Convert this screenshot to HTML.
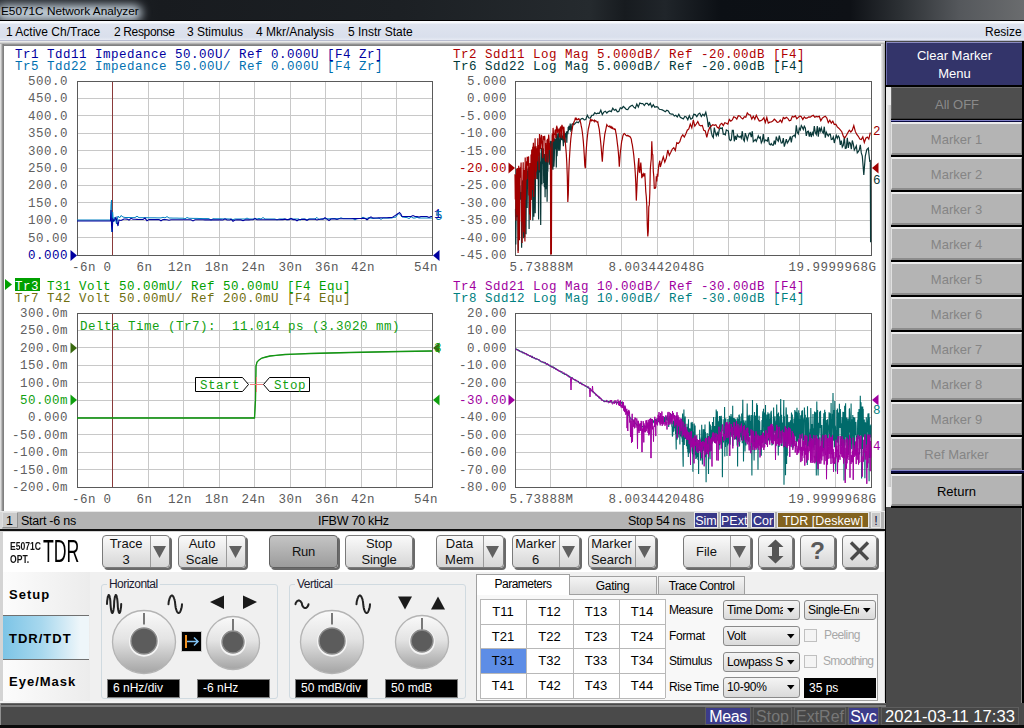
<!DOCTYPE html><html><head><meta charset="utf-8"><style>
*{margin:0;padding:0;box-sizing:border-box}
html,body{width:1024px;height:728px;overflow:hidden;background:#4a4a4a;font-family:"Liberation Sans",sans-serif}
.a{position:absolute}
.m{font-family:"Liberation Mono",monospace;font-size:12.5px;letter-spacing:0.5px;line-height:12px;white-space:pre}
.s{font-family:"Liberation Sans",sans-serif;white-space:pre}
.btn{position:absolute;border:1px solid #7a7a7a;border-radius:4px;background:linear-gradient(#fafafa,#d6d6d6);box-shadow:2px 2px 0 #6a6a6a;font-size:13px;letter-spacing:-0.2px;color:#111;text-align:center;line-height:15px}
.sk{position:absolute;left:891px;width:131px;height:33px;background:#b4b4b4;border-top:2px solid #ececec;border-left:1px solid #e0e0e0;border-right:1px solid #8a8a8a;border-bottom:2px solid #8c8c8c;color:#858585;font-size:13px;text-align:center;line-height:31px}
</style></head><body>

<div class="a" style="left:0;top:0;width:1024px;height:21px;background:linear-gradient(90deg,#2a2e34 0px,#181b1f 160px,#1c2024 400px,#252a2e 590px,#171b1f 625px,#20252a 665px,#0c1015 720px,#0e1116 850px,#2c3034 900px,#55585c 960px,#6a6c6e 1024px)"></div>
<div class="a" style="left:0;top:0;width:200px;height:20px;overflow:hidden"><div class="a" style="left:-4px;top:5px;width:146px;height:16px;background:#c4d0da;border-radius:8px;filter:blur(5px)"></div></div>
<div class="a" style="left:0;top:20px;width:1024px;height:1px;background:#000"></div>
<div class="a s" style="left:1px;top:4px;font-size:11.8px;color:#000">E5071C Network Analyzer</div>

<div class="a" style="left:0;top:21px;width:1024px;height:20px;background:linear-gradient(#f7f9fc 0,#f7f9fc 2px,#dfe4ef 3px,#d9dfec 16px,#e6eaf3 19px)"></div>
<div class="a" style="left:0;top:40px;width:1024px;height:1px;background:#b8bcd0"></div>

<div class="a s" style="left:6px;top:25px;font-size:12px;letter-spacing:0px;color:#000">1 Active Ch/Trace</div>
<div class="a s" style="left:114px;top:25px;font-size:12px;letter-spacing:-0.35px;color:#000">2 Response</div>
<div class="a s" style="left:187px;top:25px;font-size:12px;letter-spacing:0px;color:#000">3 Stimulus</div>
<div class="a s" style="left:256px;top:25px;font-size:12px;letter-spacing:0px;color:#000">4 Mkr/Analysis</div>
<div class="a s" style="left:348px;top:25px;font-size:12px;letter-spacing:0px;color:#000">5 Instr State</div>
<div class="a s" style="left:985px;top:25px;font-size:12px;letter-spacing:0px;color:#000">Resize</div>
<div class="a" style="left:0;top:41px;width:886px;height:490px;background:#d8d8d8"></div>
<div class="a" style="left:2px;top:41px;width:882px;height:471px;background:#808080"></div><div class="a" style="left:0;top:41px;width:885px;height:5px;background:linear-gradient(#f2f2f2 0,#e0e0e0 1px,#c8c8c8 2px,#a0a0a0 3px,#808080 4px)"></div><div class="a" style="left:0;top:44px;width:4px;height:467px;background:linear-gradient(90deg,#eaeaea 0,#d0d0d0 1px,#a4a4a4 2px,#808080 3px)"></div>
<div class="a" style="left:4px;top:46px;width:877px;height:465px;background:#fff"></div>
<div class="a" style="left:881px;top:44px;width:4px;height:468px;background:linear-gradient(90deg,#f0f0f0,#a0a0a0)"></div>
<div class="a" style="left:885px;top:41px;width:1px;height:490px;background:#000"></div>

<svg class="a" style="left:0;top:0" width="1024" height="728" viewBox="0 0 1024 728"><g stroke="#c8c8c8" stroke-width="1" shape-rendering="crispEdges"><line x1="112.5" y1="81" x2="112.5" y2="255"/><line x1="77" y1="98.5" x2="432" y2="98.5"/><line x1="148.5" y1="81" x2="148.5" y2="255"/><line x1="77" y1="115.5" x2="432" y2="115.5"/><line x1="183.5" y1="81" x2="183.5" y2="255"/><line x1="77" y1="133.5" x2="432" y2="133.5"/><line x1="219.5" y1="81" x2="219.5" y2="255"/><line x1="77" y1="150.5" x2="432" y2="150.5"/><line x1="254.5" y1="81" x2="254.5" y2="255"/><line x1="77" y1="168.5" x2="432" y2="168.5"/><line x1="290.5" y1="81" x2="290.5" y2="255"/><line x1="77" y1="185.5" x2="432" y2="185.5"/><line x1="325.5" y1="81" x2="325.5" y2="255"/><line x1="77" y1="202.5" x2="432" y2="202.5"/><line x1="361.5" y1="81" x2="361.5" y2="255"/><line x1="77" y1="220.5" x2="432" y2="220.5"/><line x1="396.5" y1="81" x2="396.5" y2="255"/><line x1="77" y1="237.5" x2="432" y2="237.5"/></g><line x1="112.5" y1="81" x2="112.5" y2="255" stroke="#8a3a3a" stroke-width="1" shape-rendering="crispEdges"/><rect x="77.5" y="81.5" width="355" height="174" fill="none" stroke="#5a5a5a" stroke-width="1" shape-rendering="crispEdges"/></svg>
<svg class="a" style="left:0;top:0" width="1024" height="728" viewBox="0 0 1024 728"><g stroke="#c8c8c8" stroke-width="1" shape-rendering="crispEdges"><line x1="550.5" y1="81" x2="550.5" y2="255"/><line x1="515" y1="98.5" x2="871" y2="98.5"/><line x1="586.5" y1="81" x2="586.5" y2="255"/><line x1="515" y1="115.5" x2="871" y2="115.5"/><line x1="621.5" y1="81" x2="621.5" y2="255"/><line x1="515" y1="133.5" x2="871" y2="133.5"/><line x1="657.5" y1="81" x2="657.5" y2="255"/><line x1="515" y1="150.5" x2="871" y2="150.5"/><line x1="693.5" y1="81" x2="693.5" y2="255"/><line x1="515" y1="168.5" x2="871" y2="168.5"/><line x1="728.5" y1="81" x2="728.5" y2="255"/><line x1="515" y1="185.5" x2="871" y2="185.5"/><line x1="764.5" y1="81" x2="764.5" y2="255"/><line x1="515" y1="202.5" x2="871" y2="202.5"/><line x1="799.5" y1="81" x2="799.5" y2="255"/><line x1="515" y1="220.5" x2="871" y2="220.5"/><line x1="835.5" y1="81" x2="835.5" y2="255"/><line x1="515" y1="237.5" x2="871" y2="237.5"/></g><rect x="515.5" y="81.5" width="356" height="174" fill="none" stroke="#5a5a5a" stroke-width="1" shape-rendering="crispEdges"/></svg>
<svg class="a" style="left:0;top:0" width="1024" height="728" viewBox="0 0 1024 728"><g stroke="#c8c8c8" stroke-width="1" shape-rendering="crispEdges"><line x1="112.5" y1="313" x2="112.5" y2="487"/><line x1="77" y1="330.5" x2="432" y2="330.5"/><line x1="148.5" y1="313" x2="148.5" y2="487"/><line x1="77" y1="347.5" x2="432" y2="347.5"/><line x1="183.5" y1="313" x2="183.5" y2="487"/><line x1="77" y1="365.5" x2="432" y2="365.5"/><line x1="219.5" y1="313" x2="219.5" y2="487"/><line x1="77" y1="382.5" x2="432" y2="382.5"/><line x1="254.5" y1="313" x2="254.5" y2="487"/><line x1="77" y1="400.5" x2="432" y2="400.5"/><line x1="290.5" y1="313" x2="290.5" y2="487"/><line x1="77" y1="417.5" x2="432" y2="417.5"/><line x1="325.5" y1="313" x2="325.5" y2="487"/><line x1="77" y1="434.5" x2="432" y2="434.5"/><line x1="361.5" y1="313" x2="361.5" y2="487"/><line x1="77" y1="452.5" x2="432" y2="452.5"/><line x1="396.5" y1="313" x2="396.5" y2="487"/><line x1="77" y1="469.5" x2="432" y2="469.5"/></g><line x1="112.5" y1="313" x2="112.5" y2="487" stroke="#8a3a3a" stroke-width="1" shape-rendering="crispEdges"/><rect x="77.5" y="313.5" width="355" height="174" fill="none" stroke="#5a5a5a" stroke-width="1" shape-rendering="crispEdges"/></svg>
<svg class="a" style="left:0;top:0" width="1024" height="728" viewBox="0 0 1024 728"><g stroke="#c8c8c8" stroke-width="1" shape-rendering="crispEdges"><line x1="550.5" y1="313" x2="550.5" y2="487"/><line x1="515" y1="330.5" x2="871" y2="330.5"/><line x1="586.5" y1="313" x2="586.5" y2="487"/><line x1="515" y1="347.5" x2="871" y2="347.5"/><line x1="621.5" y1="313" x2="621.5" y2="487"/><line x1="515" y1="365.5" x2="871" y2="365.5"/><line x1="657.5" y1="313" x2="657.5" y2="487"/><line x1="515" y1="382.5" x2="871" y2="382.5"/><line x1="693.5" y1="313" x2="693.5" y2="487"/><line x1="515" y1="400.5" x2="871" y2="400.5"/><line x1="728.5" y1="313" x2="728.5" y2="487"/><line x1="515" y1="417.5" x2="871" y2="417.5"/><line x1="764.5" y1="313" x2="764.5" y2="487"/><line x1="515" y1="434.5" x2="871" y2="434.5"/><line x1="799.5" y1="313" x2="799.5" y2="487"/><line x1="515" y1="452.5" x2="871" y2="452.5"/><line x1="835.5" y1="313" x2="835.5" y2="487"/><line x1="515" y1="469.5" x2="871" y2="469.5"/></g><rect x="515.5" y="313.5" width="356" height="174" fill="none" stroke="#5a5a5a" stroke-width="1" shape-rendering="crispEdges"/></svg>
<div class="a m" style="right:956px;top:76.0px;color:#606060">500.0</div><div class="a m" style="right:956px;top:93.4px;color:#606060">450.0</div><div class="a m" style="right:956px;top:110.8px;color:#606060">400.0</div><div class="a m" style="right:956px;top:128.2px;color:#606060">350.0</div><div class="a m" style="right:956px;top:145.6px;color:#606060">300.0</div><div class="a m" style="right:956px;top:163.0px;color:#606060">250.0</div><div class="a m" style="right:956px;top:180.4px;color:#606060">200.0</div><div class="a m" style="right:956px;top:197.8px;color:#606060">150.0</div><div class="a m" style="right:956px;top:215.2px;color:#606060">100.0</div><div class="a m" style="right:956px;top:232.6px;color:#606060">50.00</div><div class="a m" style="right:956px;top:250.0px;color:#0000a0">0.000</div>
<div class="a m" style="right:517px;top:76.0px;color:#606060">5.000</div><div class="a m" style="right:517px;top:93.4px;color:#606060">0.000</div><div class="a m" style="right:517px;top:110.8px;color:#606060">-5.000</div><div class="a m" style="right:517px;top:128.2px;color:#606060">-10.00</div><div class="a m" style="right:517px;top:145.6px;color:#606060">-15.00</div><div class="a m" style="right:517px;top:163.0px;color:#b00000">-20.00</div><div class="a m" style="right:517px;top:180.4px;color:#606060">-25.00</div><div class="a m" style="right:517px;top:197.8px;color:#606060">-30.00</div><div class="a m" style="right:517px;top:215.2px;color:#606060">-35.00</div><div class="a m" style="right:517px;top:232.6px;color:#606060">-40.00</div><div class="a m" style="right:517px;top:250.0px;color:#606060">-45.00</div>
<div class="a m" style="right:956px;top:308.0px;color:#606060">300.0m</div><div class="a m" style="right:956px;top:325.4px;color:#606060">250.0m</div><div class="a m" style="right:956px;top:342.8px;color:#606060">200.0m</div><div class="a m" style="right:956px;top:360.2px;color:#606060">150.0m</div><div class="a m" style="right:956px;top:377.6px;color:#606060">100.0m</div><div class="a m" style="right:956px;top:395.0px;color:#10a010">50.00m</div><div class="a m" style="right:956px;top:412.4px;color:#606060">0.000</div><div class="a m" style="right:956px;top:429.8px;color:#606060">-50.00m</div><div class="a m" style="right:956px;top:447.2px;color:#606060">-100.0m</div><div class="a m" style="right:956px;top:464.6px;color:#606060">-150.0m</div><div class="a m" style="right:956px;top:482.0px;color:#606060">-200.0m</div>
<div class="a m" style="right:517px;top:308.0px;color:#606060">20.00</div><div class="a m" style="right:517px;top:325.4px;color:#606060">10.00</div><div class="a m" style="right:517px;top:342.8px;color:#606060">0.000</div><div class="a m" style="right:517px;top:360.2px;color:#606060">-10.00</div><div class="a m" style="right:517px;top:377.6px;color:#606060">-20.00</div><div class="a m" style="right:517px;top:395.0px;color:#a000a0">-30.00</div><div class="a m" style="right:517px;top:412.4px;color:#606060">-40.00</div><div class="a m" style="right:517px;top:429.8px;color:#606060">-50.00</div><div class="a m" style="right:517px;top:447.2px;color:#606060">-60.00</div><div class="a m" style="right:517px;top:464.6px;color:#606060">-70.00</div><div class="a m" style="right:517px;top:482.0px;color:#606060">-80.00</div>
<div class="a m" style="left:72.0px;top:262px;color:#5a5a5a">-6n</div>
<div class="a m" style="left:103.5px;top:262px;color:#5a5a5a">0</div>
<div class="a m" style="left:136.5px;top:262px;color:#5a5a5a">6n</div>
<div class="a m" style="left:168.0px;top:262px;color:#5a5a5a">12n</div>
<div class="a m" style="left:205.0px;top:262px;color:#5a5a5a">18n</div>
<div class="a m" style="left:241.5px;top:262px;color:#5a5a5a">24n</div>
<div class="a m" style="left:278.5px;top:262px;color:#5a5a5a">30n</div>
<div class="a m" style="left:315.0px;top:262px;color:#5a5a5a">36n</div>
<div class="a m" style="left:351.0px;top:262px;color:#5a5a5a">42n</div>
<div class="a m" style="left:414.0px;top:262px;color:#5a5a5a">54n</div>
<div class="a m" style="left:509.5px;top:262px;color:#5a5a5a">5.73888M</div>
<div class="a m" style="left:608.5px;top:262px;color:#5a5a5a">8.003442048G</div>
<div class="a m" style="left:788.5px;top:262px;color:#5a5a5a">19.9999968G</div>
<div class="a m" style="left:72.0px;top:494px;color:#5a5a5a">-6n</div>
<div class="a m" style="left:103.5px;top:494px;color:#5a5a5a">0</div>
<div class="a m" style="left:136.5px;top:494px;color:#5a5a5a">6n</div>
<div class="a m" style="left:168.0px;top:494px;color:#5a5a5a">12n</div>
<div class="a m" style="left:205.0px;top:494px;color:#5a5a5a">18n</div>
<div class="a m" style="left:241.5px;top:494px;color:#5a5a5a">24n</div>
<div class="a m" style="left:278.5px;top:494px;color:#5a5a5a">30n</div>
<div class="a m" style="left:315.0px;top:494px;color:#5a5a5a">36n</div>
<div class="a m" style="left:351.0px;top:494px;color:#5a5a5a">42n</div>
<div class="a m" style="left:414.0px;top:494px;color:#5a5a5a">54n</div>
<div class="a m" style="left:509.5px;top:494px;color:#5a5a5a">5.73888M</div>
<div class="a m" style="left:608.5px;top:494px;color:#5a5a5a">8.003442048G</div>
<div class="a m" style="left:788.5px;top:494px;color:#5a5a5a">19.9999968G</div>
<div class="a m" style="left:15px;top:49px;color:#0000a0">Tr1 Tdd11 Impedance 50.00U/ Ref 0.000U [F4 Zr]</div>
<div class="a m" style="left:15px;top:61px;color:#0070b0">Tr5 Tdd22 Impedance 50.00U/ Ref 0.000U [F4 Zr]</div>
<div class="a m" style="left:453px;top:49px;color:#b00000">Tr2 Sdd11 Log Mag 5.000dB/ Ref -20.00dB [F4]</div>
<div class="a m" style="left:453px;top:61px;color:#003838">Tr6 Sdd22 Log Mag 5.000dB/ Ref -20.00dB [F4]</div>
<div class="a" style="left:15px;top:278px;width:25px;height:13px;background:#00a000"></div>
<svg class="a" style="left:5px;top:279px" width="8" height="12"><polygon points="0,0 7,5.5 0,11" fill="#00a000"/></svg>
<div class="a m" style="left:15px;top:281px;color:#00a000"><span style="color:#fff">Tr3</span> T31 Volt 50.00mU/ Ref 50.00mU [F4 Equ]</div>
<div class="a m" style="left:15px;top:293px;color:#707010">Tr7 T42 Volt 50.00mU/ Ref 200.0mU [F4 Equ]</div>
<div class="a m" style="left:453px;top:281px;color:#a000a0">Tr4 Sdd21 Log Mag 10.00dB/ Ref -30.00dB [F4]</div>
<div class="a m" style="left:453px;top:293px;color:#008080">Tr8 Sdd12 Log Mag 10.00dB/ Ref -30.00dB [F4]</div>
<svg class="a" style="left:0;top:0" width="1024" height="728" viewBox="0 0 1024 728"><path d="M77.0,220.0 L79.0,220.0 L81.0,220.0 L83.0,220.0 L85.0,220.0 L87.0,220.0 L89.0,220.0 L91.0,220.0 L93.0,220.0 L95.0,220.0 L97.0,220.0 L99.0,220.0 L101.0,220.0 L103.0,220.0 L105.0,220.0 L107.0,220.0 L108.0,220.0 L109.0,220.0 L110.5,220.0 L111.0,205.0 L111.5,200.0 L112.0,232.0 L112.6,212.0 L113.0,216.4 L113.5,222.0 L115.0,217.0 L116.5,224.0 L117.0,221.3 L118.0,216.0 L119.0,217.3 L119.5,218.0 L121.0,215.5 L123.0,217.0 L125.0,217.5 L127.0,217.5 L129.0,217.5 L131.0,217.6 L133.0,217.6 L135.0,217.6 L137.0,216.2 L139.0,217.7 L141.0,217.7 L143.0,217.7 L145.0,217.7 L147.0,217.7 L149.0,217.8 L151.0,217.8 L153.0,217.8 L155.0,217.8 L157.0,217.9 L159.0,217.9 L161.0,217.9 L163.0,217.3 L165.0,217.9 L167.0,216.6 L169.0,218.0 L170.0,218.0 L171.0,218.0 L173.0,218.1 L175.0,218.1 L177.0,218.1 L179.0,218.2 L181.0,218.2 L183.0,218.2 L185.0,218.8 L187.0,217.5 L189.0,218.3 L191.0,218.3 L193.0,218.4 L195.0,218.4 L197.0,218.4 L199.0,218.5 L201.0,218.5 L203.0,218.6 L205.0,218.6 L207.0,218.6 L209.0,218.7 L211.0,220.2 L213.0,218.7 L215.0,218.8 L217.0,218.8 L219.0,218.8 L221.0,218.8 L223.0,218.9 L225.0,218.9 L227.0,218.9 L229.0,219.0 L230.0,219.0 L231.0,219.0 L233.0,219.6 L235.0,219.0 L237.0,219.0 L239.0,219.0 L241.0,219.0 L243.0,219.0 L245.0,219.0 L247.0,218.1 L249.0,219.0 L251.0,219.0 L253.0,219.0 L255.0,219.0 L257.0,219.0 L259.0,218.4 L261.0,219.0 L263.0,217.5 L265.0,219.0 L267.0,219.0 L269.0,219.0 L271.0,219.0 L273.0,219.0 L275.0,219.0 L277.0,219.9 L279.0,219.0 L281.0,219.0 L283.0,219.0 L285.0,219.0 L287.0,219.9 L289.0,219.0 L291.0,219.0 L293.0,219.0 L295.0,219.0 L297.0,219.0 L299.0,219.0 L300.0,220.5 L301.0,219.0 L303.0,219.0 L305.0,219.0 L307.0,219.9 L309.0,218.9 L311.0,218.9 L313.0,218.9 L315.0,218.9 L317.0,217.4 L319.0,219.6 L321.0,218.8 L323.0,218.8 L325.0,218.8 L327.0,218.8 L329.0,218.8 L331.0,218.7 L333.0,218.7 L335.0,218.7 L337.0,218.7 L339.0,218.7 L341.0,217.8 L343.0,218.6 L345.0,218.6 L347.0,218.6 L349.0,218.6 L351.0,218.6 L353.0,218.6 L355.0,220.0 L357.0,218.5 L359.0,218.5 L360.0,218.5 L361.0,218.5 L363.0,217.1 L365.0,218.4 L367.0,218.4 L369.0,217.5 L371.0,218.3 L373.0,218.3 L375.0,218.3 L377.0,218.2 L379.0,218.2 L381.0,219.3 L383.0,218.1 L385.0,218.1 L387.0,218.1 L389.0,218.0 L391.0,218.0 L392.0,218.0 L393.0,217.5 L395.0,217.2 L396.0,217.1 L397.0,215.1 L399.0,213.4 L399.5,214.3 L401.0,215.4 L402.0,217.0 L403.0,217.1 L405.0,217.4 L407.0,217.6 L409.0,218.5 L410.0,218.0 L411.0,216.6 L413.0,218.0 L415.0,218.0 L417.0,217.3 L419.0,218.0 L421.0,218.0 L423.0,218.0 L425.0,218.0 L427.0,218.0 L429.0,218.0 L431.0,218.0 L432.0,218.0" fill="none" stroke="#0080c0" stroke-width="1"/><path d="M77.0,221.0 L79.0,221.0 L81.0,221.0 L83.0,221.0 L85.0,221.0 L87.0,221.0 L89.0,221.0 L91.0,221.0 L93.0,221.0 L95.0,221.0 L97.0,221.0 L99.0,221.0 L101.0,221.0 L103.0,221.0 L105.0,221.0 L107.0,221.0 L109.0,221.0 L110.5,221.0 L111.0,210.0 L111.6,226.0 L112.2,232.0 L112.8,219.0 L113.0,219.3 L114.0,221.0 L115.0,219.2 L116.0,217.5 L117.0,221.8 L118.0,226.0 L119.0,220.0 L121.0,220.5 L123.0,219.5 L124.0,219.0 L125.0,219.0 L127.0,219.1 L129.0,220.1 L131.0,218.3 L133.0,219.3 L135.0,219.3 L137.0,219.4 L139.0,219.5 L140.0,219.5 L141.0,219.5 L143.0,219.5 L145.0,218.1 L147.0,220.8 L149.0,219.6 L151.0,219.6 L153.0,219.6 L155.0,219.6 L157.0,219.6 L159.0,219.6 L161.0,220.8 L163.0,219.6 L165.0,219.6 L167.0,219.7 L169.0,220.2 L171.0,219.7 L173.0,219.7 L175.0,219.7 L177.0,219.7 L179.0,219.7 L181.0,219.7 L183.0,219.7 L185.0,219.8 L187.0,219.8 L189.0,219.8 L191.0,219.8 L193.0,220.9 L195.0,219.8 L197.0,219.8 L199.0,219.8 L201.0,219.8 L203.0,219.8 L205.0,219.9 L207.0,219.9 L209.0,219.9 L211.0,219.9 L213.0,219.9 L215.0,219.9 L217.0,219.9 L219.0,219.9 L221.0,219.9 L223.0,220.0 L225.0,218.8 L227.0,220.0 L229.0,220.0 L230.0,220.0 L231.0,219.2 L233.0,221.2 L235.0,220.0 L237.0,219.9 L239.0,219.9 L241.0,219.9 L243.0,220.7 L245.0,219.9 L247.0,219.9 L249.0,219.9 L251.0,219.8 L253.0,219.8 L255.0,218.4 L257.0,219.8 L259.0,219.8 L261.0,219.8 L263.0,219.8 L265.0,219.8 L267.0,219.7 L269.0,219.7 L271.0,219.7 L273.0,219.7 L275.0,219.7 L277.0,219.7 L279.0,219.7 L281.0,219.6 L283.0,219.6 L285.0,219.1 L287.0,219.6 L289.0,219.6 L291.0,218.5 L293.0,219.6 L295.0,219.5 L297.0,220.8 L299.0,219.5 L300.0,219.5 L301.0,219.5 L303.0,219.4 L305.0,219.4 L307.0,220.3 L309.0,219.3 L311.0,219.3 L313.0,219.3 L315.0,219.2 L317.0,220.0 L319.0,219.2 L321.0,219.2 L323.0,219.1 L325.0,217.7 L327.0,219.1 L329.0,220.5 L331.0,219.0 L333.0,218.9 L335.0,218.9 L337.0,219.5 L339.0,218.8 L341.0,218.8 L343.0,218.8 L345.0,218.8 L347.0,218.7 L349.0,218.7 L351.0,218.7 L353.0,218.6 L355.0,218.6 L357.0,218.6 L359.0,218.5 L360.0,218.5 L361.0,218.5 L363.0,218.4 L365.0,218.3 L367.0,219.7 L369.0,218.2 L371.0,216.9 L373.0,218.1 L375.0,218.0 L377.0,218.0 L379.0,217.9 L381.0,217.8 L383.0,217.8 L385.0,217.7 L387.0,217.7 L389.0,217.6 L391.0,217.5 L392.0,217.5 L393.0,216.9 L395.0,215.6 L396.0,215.0 L397.0,214.3 L399.0,212.9 L399.5,212.5 L401.0,214.2 L402.0,216.5 L403.0,216.5 L405.0,216.5 L407.0,216.5 L409.0,216.5 L411.0,216.5 L413.0,215.5 L415.0,216.5 L417.0,216.5 L419.0,217.1 L421.0,216.5 L423.0,216.5 L425.0,216.5 L427.0,216.5 L429.0,217.4 L431.0,216.5 L432.0,216.5" fill="none" stroke="#0000a0" stroke-width="1.1"/><path d="M515.5,208.7 L515.8,244.6 L516.2,209.9 L516.5,197.1 L516.9,217.3 L517.2,192.9 L517.5,194.9 L517.9,215.3 L518.2,250.7 L518.6,214.0 L518.9,187.0 L519.2,200.2 L519.6,187.0 L519.9,185.8 L520.3,197.3 L520.6,199.6 L520.9,197.7 L521.3,192.1 L521.6,247.7 L522.0,225.3 L522.3,182.9 L522.6,180.4 L523.0,213.7 L523.3,221.9 L523.7,238.2 L524.0,174.5 L524.3,228.6 L524.7,237.1 L525.0,175.3 L525.4,210.1 L525.7,172.4 L526.0,234.3 L526.4,170.9 L526.7,168.9 L527.1,208.1 L527.4,187.7 L527.7,172.3 L528.1,170.2 L528.4,168.1 L528.8,168.1 L529.1,229.0 L529.4,173.1 L529.8,166.9 L530.1,211.1 L530.5,167.7 L530.8,164.6 L531.1,198.4 L531.5,164.8 L531.8,163.3 L532.2,165.5 L532.5,168.6 L532.8,220.5 L533.2,182.4 L533.5,159.7 L533.9,216.8 L534.2,160.7 L534.5,197.6 L534.9,163.0 L535.2,213.3 L535.6,166.0 L535.9,159.8 L536.2,160.9 L536.6,161.8 L536.9,179.1 L537.3,158.1 L537.6,153.2 L537.9,178.6 L538.3,180.2 L538.6,219.4 L539.0,151.4 L539.3,163.6 L539.6,152.8 L540.0,172.4 L540.3,161.6 L540.7,225.0 L541.0,184.0 L541.3,147.9 L541.7,151.9 L542.0,184.4 L542.4,149.6 L542.7,163.6 L543.0,156.6 L543.4,148.4 L543.7,183.1 L544.1,181.2 L544.4,187.3 L544.7,154.0 L545.1,197.2 L545.4,156.6 L545.8,189.2 L546.1,165.5 L546.4,163.4 L546.8,145.9 L547.1,201.7 L547.5,170.9 L547.8,171.8 L548.1,154.4 L548.5,145.1 L548.8,143.7 L549.2,151.2 L549.5,164.8 L549.8,161.3 L550.2,141.3 L550.5,146.0 L550.9,140.7 L551.2,178.2 L551.5,150.4 L551.9,145.2 L552.2,141.0 L552.6,168.3 L552.9,169.7 L553.2,150.5 L553.6,139.6 L553.9,166.7 L554.3,158.9 L554.6,138.5 L554.9,142.8 L555.3,138.4 L555.6,149.5 L556.0,141.9 L556.3,167.5 L556.6,134.0 L557.0,156.1 L557.3,150.4 L557.7,139.8 L558.0,133.4 L558.3,137.2 L558.7,150.7 L559.0,132.4 L559.4,143.0 L559.7,143.6 L560.0,150.8 L560.4,141.3 L560.7,135.5 L561.1,133.0 L561.4,140.0 L561.7,132.7 L562.1,140.3 L562.4,139.4 L562.8,135.6 L563.1,142.1 L563.4,146.2 L563.8,130.7 L564.1,138.4 L564.5,132.4 L564.8,142.6 L565.1,141.8 L565.5,133.0 L565.8,137.5 L566.2,135.0 L566.5,131.4 L566.8,142.7 L567.2,132.7 L567.5,131.1 L567.9,134.2 L568.2,126.9 L568.5,131.2 L568.9,125.8 L569.2,129.5 L569.6,129.5 L569.9,128.2 L570.2,123.5 L570.6,128.3 L570.9,131.0 L571.3,130.6 L571.6,127.6 L571.9,124.4 L572.3,123.8 L573.8,124.8 L575.3,123.3 L576.8,121.9 L578.3,122.8 L579.8,120.7 L581.3,118.7 L582.8,118.3 L584.3,119.9 L585.8,119.5 L587.3,115.3 L588.8,118.0 L590.3,118.1 L591.8,115.4 L593.3,115.1 L594.8,112.7 L596.3,113.9 L597.8,113.2 L599.3,113.4 L600.8,110.2 L602.3,114.6 L603.8,112.1 L605.3,111.2 L606.8,113.0 L608.3,111.5 L609.8,110.9 L611.3,111.6 L612.8,108.2 L614.3,110.3 L615.8,109.4 L617.3,111.8 L618.8,111.4 L620.3,107.8 L621.8,108.6 L623.3,106.5 L624.8,107.8 L626.3,109.4 L627.8,109.6 L629.3,107.2 L630.8,106.1 L632.3,105.2 L633.8,107.1 L635.3,108.3 L636.8,104.1 L638.3,107.1 L639.8,103.0 L641.3,103.6 L642.8,103.5 L644.3,105.5 L645.8,103.4 L647.3,103.3 L648.8,105.2 L650.3,103.3 L651.8,107.1 L653.3,104.7 L654.8,107.3 L656.3,106.6 L657.8,107.0 L659.3,109.3 L660.8,109.5 L662.3,109.9 L663.8,110.7 L665.3,111.7 L666.8,110.3 L668.3,111.0 L669.8,113.6 L671.3,114.1 L672.8,114.0 L674.3,116.0 L675.8,115.3 L677.3,117.0 L678.8,114.3 L680.3,117.3 L681.8,118.1 L683.3,119.0 L684.8,116.5 L686.3,116.9 L687.8,119.7 L689.3,115.7 L690.8,119.2 L692.3,118.3 L693.8,114.3 L695.3,114.6 L696.8,116.7 L698.3,114.1 L699.8,113.1 L701.3,116.5 L702.8,114.2 L704.3,115.8 L705.8,112.2 L707.3,119.0 L708.3,127.2 L709.3,121.9 L710.3,125.2 L711.3,132.2 L712.3,136.1 L713.3,137.7 L714.3,127.6 L715.3,132.4 L716.3,135.6 L717.3,132.7 L718.3,135.1 L719.3,129.3 L720.3,128.0 L721.3,128.6 L722.3,127.9 L723.3,134.2 L724.3,134.0 L725.3,134.8 L726.3,129.9 L727.3,130.5 L728.3,130.9 L729.3,138.7 L730.3,140.6 L731.3,140.0 L732.3,130.3 L733.3,130.3 L734.3,141.3 L735.3,135.9 L736.3,139.9 L737.3,134.9 L738.3,136.6 L739.3,137.2 L740.3,136.2 L741.3,138.2 L742.3,131.2 L743.3,139.4 L744.3,141.1 L745.3,133.2 L746.3,136.4 L747.3,139.9 L748.3,135.9 L749.3,133.3 L750.3,133.0 L751.3,137.2 L752.3,131.2 L753.3,141.7 L754.3,140.6 L755.3,139.5 L756.3,141.3 L757.3,138.6 L758.3,135.9 L759.3,138.2 L760.3,137.1 L761.3,142.8 L762.3,140.7 L763.3,134.1 L764.3,141.9 L765.3,139.9 L766.3,140.3 L767.3,141.1 L768.3,137.1 L769.3,144.0 L770.3,144.8 L771.3,143.6 L772.3,145.2 L773.3,145.1 L774.3,140.7 L775.3,144.5 L776.3,136.6 L777.3,139.8 L778.3,141.2 L779.3,135.7 L780.3,139.8 L781.3,143.1 L782.3,142.8 L783.3,138.1 L784.3,146.6 L785.3,143.2 L786.3,139.2 L787.3,143.0 L788.3,141.4 L789.3,139.6 L790.3,136.4 L791.3,142.3 L792.3,136.6 L793.3,135.9 L794.3,135.2 L795.3,136.8 L796.3,125.3 L797.3,132.4 L798.3,133.9 L799.3,128.1 L800.3,129.8 L801.3,125.6 L802.3,127.3 L803.3,129.5 L804.3,126.2 L805.3,128.0 L806.3,135.9 L807.3,131.6 L808.3,131.1 L809.3,136.6 L810.3,131.8 L811.3,137.0 L812.3,132.7 L813.3,134.9 L814.3,126.1 L815.3,132.5 L816.3,134.5 L817.3,126.0 L818.3,136.7 L819.3,127.5 L820.3,131.3 L821.3,127.8 L822.3,131.8 L823.3,133.2 L824.3,126.7 L825.3,137.6 L826.3,132.2 L827.3,134.4 L828.3,136.1 L829.3,134.2 L830.3,134.2 L831.3,139.5 L832.3,139.3 L833.3,136.9 L834.3,143.0 L835.3,138.6 L836.3,135.4 L837.3,138.3 L838.3,136.0 L839.3,137.5 L840.3,144.8 L841.3,140.6 L842.3,146.9 L843.3,145.2 L844.3,137.0 L845.3,148.4 L846.3,148.0 L847.3,137.7 L848.3,147.9 L849.3,142.3 L850.3,143.0 L851.3,149.1 L852.3,140.5 L853.3,144.2 L854.3,150.0 L855.3,148.2 L856.3,145.9 L857.3,152.8 L858.3,151.7 L859.3,149.9 L860.3,144.8 L861.3,152.9 L862.3,156.2 L863.8,174.9 L865.3,156.1 L866.8,149.5 L868.3,148.0 L869.8,162.0 L870.3,160.0 L870.6,241.7 L871.0,241.7" fill="none" stroke="#0a3838" stroke-width="1.2"/><path d="M515.0,174.2 L515.3,199.4 L515.7,174.9 L516.0,220.6 L516.4,184.7 L516.7,168.8 L517.0,189.7 L517.4,215.3 L517.7,168.0 L518.1,252.9 L518.4,229.2 L518.7,165.8 L519.1,179.8 L519.4,240.3 L519.8,168.2 L520.1,168.0 L520.4,177.6 L520.8,170.6 L521.1,162.6 L521.5,221.7 L521.8,207.9 L522.1,243.1 L522.5,206.8 L522.8,186.3 L523.2,162.2 L523.5,212.6 L523.8,232.3 L524.2,169.8 L524.5,172.1 L524.9,241.4 L525.2,157.4 L525.5,199.7 L525.9,174.4 L526.2,179.9 L526.6,161.3 L526.9,178.9 L527.2,156.8 L527.6,165.7 L527.9,162.8 L528.3,157.4 L528.6,156.4 L528.9,195.6 L529.3,185.1 L529.6,214.4 L530.0,163.1 L530.3,220.0 L530.6,205.4 L531.0,154.6 L531.3,199.9 L531.7,149.5 L532.0,185.8 L532.3,190.1 L532.7,146.7 L533.0,151.2 L533.4,142.8 L533.7,197.1 L534.0,173.8 L534.4,146.4 L534.7,154.8 L535.1,138.2 L535.4,177.7 L535.7,179.0 L536.1,146.2 L536.4,171.6 L536.8,148.2 L537.1,161.4 L537.4,160.3 L537.8,138.3 L538.1,156.0 L538.5,148.6 L538.8,145.0 L539.1,170.3 L539.5,134.1 L539.8,135.8 L540.2,138.6 L540.5,149.3 L540.8,144.5 L541.2,142.0 L541.5,134.8 L541.9,141.3 L542.2,142.7 L542.5,155.2 L542.9,158.2 L543.2,136.1 L543.6,138.0 L543.9,138.2 L544.2,138.9 L544.6,135.9 L544.9,138.9 L545.3,161.0 L545.6,143.1 L545.9,162.2 L546.3,145.9 L546.6,154.1 L547.0,139.8 L547.3,143.5 L547.6,138.8 L548.0,162.6 L548.3,141.6 L548.7,134.5 L549.0,138.9 L549.3,149.9 L549.7,143.1 L550.0,147.2 L550.4,149.3 L550.7,254.0 L551.0,254.0 L551.4,254.0 L551.7,171.7 L552.1,135.8 L552.4,133.7 L552.7,141.7 L553.1,127.9 L553.4,133.0 L553.8,141.4 L554.1,133.3 L554.4,134.5 L554.8,134.0 L555.1,130.5 L555.5,129.5 L555.8,138.1 L556.1,136.7 L556.5,127.0 L556.8,126.5 L557.2,127.7 L557.5,130.5 L557.8,133.1 L558.2,129.8 L558.5,130.8 L558.9,128.6 L559.2,130.6 L559.5,137.4 L559.9,129.2 L560.2,127.8 L560.6,127.4 L560.9,126.3 L561.2,137.9 L561.6,128.9 L561.9,124.9 L562.3,126.2 L562.6,129.1 L562.9,127.9 L563.3,139.2 L563.6,126.8 L564.0,127.9 L564.3,135.8 L564.8,138.4 L565.3,142.1 L565.8,148.1 L566.3,154.0 L566.8,163.2 L567.3,176.5 L567.8,201.9 L568.3,193.9 L568.8,172.2 L569.3,160.8 L569.8,152.2 L570.3,145.1 L570.8,139.0 L571.3,134.8 L571.8,131.5 L572.3,128.7 L572.8,125.5 L573.3,124.3 L573.8,122.5 L574.3,121.2 L574.8,120.2 L575.3,118.3 L575.8,119.2 L576.3,118.5 L576.8,119.8 L577.3,119.6 L577.8,119.6 L578.3,118.7 L578.8,118.6 L579.3,119.8 L579.8,119.9 L580.3,121.7 L580.8,123.5 L581.3,126.5 L581.8,128.7 L582.3,132.0 L582.8,136.2 L583.3,141.1 L583.8,147.7 L584.3,155.9 L584.8,165.4 L585.3,168.1 L585.8,157.3 L586.3,149.3 L586.8,142.2 L587.3,137.3 L587.8,132.7 L588.3,129.2 L588.8,127.0 L589.3,124.8 L589.8,122.6 L590.3,120.1 L590.8,119.3 L591.3,120.7 L591.8,120.1 L592.3,120.0 L592.8,120.6 L593.3,120.8 L593.8,120.7 L594.3,120.2 L594.8,121.6 L595.3,120.8 L595.8,120.7 L596.3,121.3 L596.8,121.8 L597.3,122.2 L597.8,121.8 L598.3,125.0 L598.8,127.2 L599.3,129.7 L599.8,134.4 L600.3,138.4 L600.8,143.4 L601.3,148.9 L601.8,155.5 L602.3,161.8 L602.8,153.9 L603.3,147.0 L603.8,142.5 L604.3,138.5 L604.8,134.1 L605.3,132.0 L605.8,129.5 L606.3,127.2 L606.8,124.7 L607.3,125.4 L607.8,126.0 L608.3,126.2 L608.8,126.6 L609.3,126.6 L609.8,126.0 L610.3,127.4 L610.8,127.0 L611.3,127.8 L611.8,127.0 L612.3,128.5 L612.8,128.0 L613.3,128.7 L613.8,128.9 L614.3,129.4 L614.8,128.8 L615.3,129.2 L615.8,132.3 L616.3,134.8 L616.8,138.7 L617.3,143.0 L617.8,146.8 L618.3,151.7 L618.8,158.0 L619.3,166.7 L619.8,159.4 L620.3,152.6 L620.8,148.8 L621.3,144.2 L621.8,140.7 L622.3,139.2 L622.8,136.2 L623.3,134.8 L623.8,133.8 L624.3,133.5 L624.8,133.9 L625.3,134.5 L625.8,135.1 L626.3,135.6 L626.8,135.8 L627.3,135.8 L627.8,135.4 L628.3,135.9 L628.8,136.1 L629.3,136.5 L629.8,136.4 L630.3,137.0 L630.8,138.0 L631.3,139.1 L631.8,142.6 L632.3,144.7 L632.8,148.1 L633.3,151.5 L633.8,155.6 L634.3,161.0 L634.8,166.1 L635.3,173.8 L635.8,183.6 L636.3,200.6 L636.8,190.3 L637.3,178.5 L637.8,170.8 L638.3,163.1 L638.8,158.0 L639.3,171.9 L639.8,172.3 L640.3,167.7 L640.8,162.5 L641.3,169.3 L641.8,178.2 L642.3,174.7 L642.8,175.7 L643.3,174.2 L643.8,176.3 L644.3,174.0 L644.8,173.8 L645.3,182.5 L645.8,191.7 L646.3,196.7 L646.8,205.7 L647.3,225.3 L647.8,236.5 L648.3,230.9 L648.8,206.9 L649.3,204.9 L649.8,193.2 L650.3,169.4 L650.8,163.3 L651.3,158.8 L651.8,141.2 L652.3,154.1 L652.8,154.7 L653.3,171.1 L653.8,176.7 L654.3,188.8 L654.8,187.8 L655.3,188.1 L655.8,187.2 L656.3,176.2 L656.8,181.5 L657.3,173.7 L657.8,176.6 L658.3,169.9 L658.8,165.0 L659.3,162.8 L659.8,160.7 L660.3,167.0 L661.8,161.9 L663.3,156.8 L664.8,162.1 L666.3,158.1 L667.8,150.0 L669.3,155.3 L670.8,152.3 L672.3,149.1 L673.8,147.8 L675.3,150.5 L676.8,142.7 L678.3,143.5 L679.8,141.6 L681.3,137.0 L682.8,134.9 L684.3,137.0 L685.8,133.9 L687.3,130.2 L688.8,128.9 L690.3,124.0 L691.8,127.9 L693.3,120.0 L694.8,126.1 L696.3,124.0 L697.8,121.5 L699.3,125.0 L700.8,125.9 L702.3,125.4 L703.8,130.4 L705.3,131.0 L706.8,137.3 L708.3,130.9 L709.8,127.4 L711.3,126.0 L712.8,124.7 L714.3,125.3 L715.8,124.8 L717.3,127.3 L718.8,128.3 L720.3,124.3 L721.8,123.3 L723.3,125.5 L724.8,122.7 L726.3,123.3 L727.8,124.2 L729.3,119.5 L730.8,121.2 L732.3,119.9 L733.8,116.8 L735.3,117.4 L736.8,119.1 L738.3,115.7 L739.8,116.0 L741.3,117.9 L742.8,119.0 L744.3,116.8 L745.8,117.3 L747.3,113.0 L748.8,114.6 L750.3,115.1 L751.8,119.1 L753.3,116.2 L754.8,119.2 L756.3,115.2 L757.8,118.4 L759.3,121.1 L760.8,120.7 L762.3,119.8 L763.8,117.7 L765.3,122.4 L766.8,117.5 L768.3,123.1 L769.8,122.2 L771.3,122.0 L772.8,121.1 L774.3,119.2 L775.8,120.5 L777.3,122.3 L778.8,122.0 L780.3,120.1 L781.8,122.3 L783.3,117.5 L784.8,118.6 L786.3,117.2 L787.8,118.3 L789.3,120.8 L790.8,120.3 L792.3,116.4 L793.8,117.1 L795.3,115.7 L796.8,118.8 L798.3,117.4 L799.8,116.0 L801.3,116.8 L802.8,119.6 L804.3,116.9 L805.8,118.4 L807.3,117.9 L808.8,116.8 L810.3,117.2 L811.8,116.0 L813.3,115.3 L814.8,117.3 L816.3,116.4 L817.8,116.8 L819.3,116.2 L820.8,120.8 L822.3,118.1 L823.8,117.0 L825.3,116.2 L826.8,118.0 L828.3,122.7 L829.8,120.3 L831.3,123.1 L832.8,121.2 L834.3,124.5 L835.8,124.1 L837.3,126.9 L838.8,128.2 L840.3,129.8 L841.8,131.7 L843.3,136.1 L844.8,137.9 L846.3,135.5 L847.8,132.7 L849.3,130.2 L850.8,132.0 L852.3,130.2 L853.8,125.6 L855.3,131.4 L856.8,134.5 L858.3,136.3 L859.8,139.1 L861.3,139.6 L862.8,136.9 L864.3,142.5 L865.8,138.2 L867.3,137.0 L868.8,139.1 L870.3,132.7" fill="none" stroke="#a00000" stroke-width="1.2"/><path d="M77.0,418.0 L254.5,418.0 L255.5,400.0 L256.0,366.0 L257.0,362.0 L259.0,360.0 L262.0,358.0 L266.0,357.0 L270.0,356.0 L276.0,355.4 L285.0,354.5 L295.0,354.1 L310.0,353.5 L330.0,353.0 L350.0,352.5 L375.0,352.0 L400.0,351.5 L432.0,351.0" fill="none" stroke="#188818" stroke-width="1.3"/><path d="M77.0,418.0 L254.5,418.0 L255.5,400.0 L256.0,366.0 L257.0,362.0 L259.0,360.0 L262.0,358.0 L266.0,357.0 L270.0,356.0 L276.0,355.4 L285.0,354.5 L295.0,354.1 L310.0,353.5 L330.0,353.0 L350.0,352.5 L375.0,352.0 L400.0,351.5 L432.0,351.0" fill="none" stroke="#10a010" stroke-width="0.7"/><path d="M515.5,348.5 L516.0,348.9 L516.5,349.4 L517.0,349.9 L517.5,349.6 L518.0,349.8 L518.5,350.2 L519.0,350.9 L519.5,350.6 L520.0,351.4 L520.5,351.6 L521.0,351.3 L521.5,351.9 L522.0,352.1 L522.5,352.3 L523.0,353.1 L523.5,352.4 L524.0,352.6 L524.5,353.7 L525.0,353.4 L525.5,353.5 L526.0,353.8 L526.5,354.1 L527.0,354.9 L527.5,354.4 L528.0,354.7 L528.5,355.3 L529.0,355.5 L529.5,356.1 L530.0,356.3 L530.5,356.0 L531.0,356.1 L531.5,357.0 L532.0,357.4 L532.5,356.6 L533.0,357.6 L533.5,358.0 L534.0,358.0 L534.5,357.8 L535.0,358.6 L535.5,358.8 L536.0,358.5 L536.5,359.2 L537.0,359.0 L537.5,359.0 L538.0,359.6 L538.5,359.8 L539.0,360.1 L539.5,360.6 L540.0,361.0 L540.5,361.4 L541.0,361.7 L541.5,361.9 L542.0,361.9 L542.5,361.7 L543.0,361.8 L543.5,362.5 L544.0,362.7 L544.5,363.0 L545.0,362.7 L545.5,363.0 L546.0,364.0 L546.5,363.9 L547.0,364.2 L547.5,363.9 L548.0,364.4 L548.5,365.2 L549.0,365.1 L549.5,365.8 L550.0,365.3 L550.5,365.8 L551.0,366.4 L551.5,366.4 L552.0,367.0 L552.5,367.1 L553.0,366.9 L553.5,367.2 L554.0,368.3 L554.5,367.8 L555.0,368.1 L555.5,368.5 L556.0,369.2 L556.5,369.6 L557.0,369.5 L557.5,369.9 L558.0,370.4 L558.5,370.2 L559.0,370.6 L559.5,371.1 L560.0,371.4 L560.5,371.1 L561.0,371.5 L561.5,371.8 L562.0,372.7 L562.5,372.9 L563.0,373.5 L563.5,373.6 L564.0,373.3 L564.5,374.1 L565.0,374.6 L565.5,374.3 L566.0,374.2 L566.5,374.9 L567.0,375.1 L567.5,375.2 L568.0,375.4 L568.5,375.8 L569.0,376.8 L569.5,376.3 L570.0,377.1 L570.5,377.0 L571.0,377.3 L571.5,378.2 L572.0,378.0 L572.5,378.1 L573.0,378.7 L573.5,379.2 L574.0,379.3 L574.5,380.0 L575.0,379.8 L575.5,380.2 L576.0,380.7 L576.5,380.7 L577.0,381.3 L577.5,381.3 L578.0,381.3 L578.5,381.5 L579.0,382.5 L579.5,382.7 L580.0,383.2 L580.5,383.3 L581.0,383.4 L581.5,383.3 L582.0,384.3 L582.5,383.9 L583.0,384.5 L583.5,384.5 L584.0,385.0 L584.5,385.2 L585.0,385.6 L585.5,386.2 L586.0,386.3 L586.5,386.3 L587.0,387.1 L587.5,387.4 L588.0,387.7 L588.5,387.2 L589.0,388.1 L589.5,388.9 L590.0,388.7 L590.5,389.1 L591.0,390.2 L591.5,390.2 L592.0,390.7 L592.5,391.6 L593.0,391.6 L593.5,391.9 L594.0,392.4 L594.5,393.0 L595.0,393.8 L595.5,393.9 L596.0,394.8 L596.5,394.5 L597.0,395.2 L597.5,396.0 L598.0,396.3 L598.5,396.8 L599.0,397.7 L599.5,397.5 L600.0,397.9 L600.5,398.2 L601.0,399.1 L601.5,399.4 L602.0,400.0 L602.5,400.0 L603.0,400.5 L603.5,400.9 L604.0,401.4 L604.5,401.0 L605.0,401.6 L605.5,401.3 L606.0,401.2 L606.5,401.6 L607.0,401.2 L607.5,401.6 L608.0,401.9 L608.5,401.6 L609.0,401.5 L609.5,401.3 L610.0,401.8 L610.5,401.5 L611.0,401.7 L611.5,401.9 L612.0,402.4 L612.5,402.2 L613.0,402.1 L613.5,402.5 L614.0,402.0 L614.5,402.1 L615.0,402.4 L615.5,402.4 L616.0,402.1 L616.5,402.3 L617.0,402.8 L617.5,402.3 L618.0,402.8 L618.5,402.2 L619.0,403.1 L619.5,402.9 L620.0,402.6 L620.5,403.3 L621.0,403.2 L621.5,402.5 L622.0,402.7 L622.5,403.9 L623.0,405.4 L623.5,405.4 L624.0,406.3 L624.5,407.5 L625.0,408.1 L625.5,409.4 L626.0,410.5 L626.5,411.3 L627.0,411.9 L627.5,412.7 L628.0,414.4 L628.5,415.0 L629.0,416.0 L629.5,416.5 L630.0,417.3 L630.5,418.1 L631.0,418.6 L631.5,419.0 L632.0,419.2 L632.5,419.6 L633.0,420.1 L633.5,421.4 L634.0,421.2 L634.5,422.3 L635.0,423.2 L635.5,423.1 L636.0,423.8 L636.5,424.4 L637.0,425.4 L637.5,425.3 L638.0,425.6 L638.5,424.9 L639.0,425.7 L639.5,425.6 L640.0,425.7 L640.5,426.2 L641.0,426.2 L641.5,426.5 L642.0,426.5 L642.5,426.8 L643.0,426.4 L643.5,426.7 L644.0,427.0 L644.5,426.8 L645.0,426.6 L645.5,426.9 L646.0,427.0 L646.5,426.9 L647.0,426.0 L647.5,426.0 L648.0,425.7 L648.5,425.7 L649.0,426.1 L649.5,425.4 L650.0,421.4 L650.2,421.5 L650.4,421.6 L650.7,421.2 L650.9,421.0 L651.1,420.9 L651.3,421.0 L651.5,421.2 L651.8,421.8 L652.0,421.3 L652.2,421.6 L652.4,420.4 L652.6,420.8 L652.9,421.3 L653.1,420.3 L653.3,421.4 L653.5,422.0 L653.7,421.3 L654.0,420.4 L654.2,421.7 L654.4,421.1 L654.6,422.2 L654.8,419.7 L655.1,419.8 L655.3,420.7 L655.5,421.8 L655.7,419.6 L655.9,419.7 L656.2,419.4 L656.4,420.2 L656.6,422.0 L656.8,420.0 L657.0,421.7 L657.3,424.9 L657.5,421.4 L657.7,419.9 L657.9,420.0 L658.1,421.0 L658.4,417.4 L658.6,421.9 L658.8,418.1 L659.0,418.8 L659.2,420.9 L659.5,420.5 L659.7,416.1 L659.9,421.9 L660.1,422.1 L660.3,418.8 L660.6,420.6 L660.8,419.3 L661.0,421.1 L661.2,418.2 L661.4,417.3 L661.7,422.3 L661.9,417.9 L662.1,418.4 L662.3,420.7 L662.5,421.9 L662.8,423.2 L663.0,420.7 L663.2,422.6 L663.4,421.0 L663.6,419.2 L663.9,421.3 L664.1,418.5 L664.3,422.5 L664.5,416.7 L664.7,420.1 L665.0,421.3 L665.2,419.7 L665.4,421.4 L665.6,422.7 L665.8,417.7 L666.1,417.7 L666.3,416.7 L666.5,418.4 L666.7,420.4 L666.9,419.9 L667.2,415.6 L667.4,420.6 L667.6,415.9 L667.8,418.2 L668.0,419.5 L668.3,423.0 L668.5,421.0 L668.7,427.0 L668.9,424.1 L669.1,418.7 L669.4,416.3 L669.6,415.8 L669.8,420.4 L670.0,420.1 L670.2,423.4 L670.5,419.7 L670.7,415.7 L670.9,413.9 L671.1,415.5 L671.3,420.2 L671.6,414.4 L671.8,426.8 L672.0,422.8 L672.2,430.0 L672.4,436.6 L672.7,435.0 L672.9,428.4 L673.1,426.6 L673.3,431.9 L673.5,420.6 L673.8,431.3 L674.0,426.0 L674.2,427.8 L674.4,424.0 L674.6,421.8 L674.9,428.1 L675.1,423.1 L675.3,419.8 L675.5,433.9 L675.7,420.5 L676.0,439.3 L676.2,449.4 L676.4,415.8 L676.6,430.2 L676.8,421.9 L677.1,439.7 L677.3,417.6 L677.5,425.4 L677.7,432.3 L677.9,418.9 L678.2,437.4 L678.4,429.5 L678.6,434.0 L678.8,424.6 L679.0,424.3 L679.3,422.3 L679.5,427.2 L679.7,432.6 L679.9,444.5 L680.1,420.8 L680.4,424.3 L680.6,426.2 L680.8,436.5 L681.0,435.1 L681.2,433.0 L681.5,427.9 L681.7,430.0 L681.9,438.5 L682.1,418.9 L682.3,442.0 L682.6,413.6 L682.8,447.8 L683.0,459.7 L683.2,466.8 L683.4,429.6 L683.7,432.9 L683.9,409.5 L684.1,426.9 L684.3,444.9 L684.5,433.5 L684.8,438.4 L685.0,422.7 L685.2,416.4 L685.4,438.9 L685.6,431.8 L685.9,436.3 L686.1,436.2 L686.3,441.1 L686.5,446.2 L686.7,435.2 L687.0,423.7 L687.2,433.2 L687.4,449.0 L687.6,426.8 L687.8,452.6 L688.1,428.8 L688.3,457.1 L688.5,419.2 L688.7,451.6 L688.9,442.1 L689.2,452.8 L689.4,452.7 L689.6,428.3 L689.8,437.1 L690.0,428.4 L690.3,446.7 L690.5,430.1 L690.7,429.2 L690.9,451.8 L691.1,422.4 L691.4,436.9 L691.6,441.2 L691.8,422.8 L692.0,425.2 L692.2,421.9 L692.5,454.3 L692.7,423.7 L692.9,471.8 L693.1,431.4 L693.3,437.1 L693.6,456.7 L693.8,441.6 L694.0,444.7 L694.2,423.5 L694.4,436.4 L694.7,445.6 L694.9,435.8 L695.1,425.5 L695.3,455.3 L695.5,436.4 L695.8,459.0 L696.0,454.3 L696.2,458.2 L696.4,458.6 L696.6,448.9 L696.9,435.1 L697.1,453.3 L697.3,456.9 L697.5,448.0 L697.7,452.0 L698.0,460.0 L698.2,442.5 L698.4,447.6 L698.6,474.0 L698.8,448.2 L699.1,443.3 L699.3,445.0 L699.5,445.1 L699.7,429.8 L699.9,446.4 L700.2,445.5 L700.4,448.4 L700.6,459.5 L700.8,460.6 L701.0,451.1 L701.3,437.6 L701.5,457.7 L701.7,424.8 L701.9,433.3 L702.1,446.3 L702.4,464.4 L702.6,438.8 L702.8,448.7 L703.0,443.7 L703.2,429.3 L703.5,445.2 L703.7,449.5 L703.9,451.3 L704.1,429.2 L704.3,439.5 L704.6,447.3 L704.8,444.5 L705.0,424.5 L705.2,457.3 L705.4,431.9 L705.7,454.0 L705.9,441.6 L706.1,482.3 L706.3,456.0 L706.5,451.1 L706.8,453.8 L707.0,436.3 L707.2,433.0 L707.4,440.9 L707.6,444.6 L707.9,435.9 L708.1,454.5 L708.3,445.5 L708.5,474.1 L708.7,447.6 L709.0,433.5 L709.2,442.5 L709.4,421.4 L709.6,435.1 L709.8,450.6 L710.1,459.2 L710.3,424.5 L710.5,428.6 L710.7,448.5 L710.9,429.7 L711.2,450.1 L711.4,451.0 L711.6,436.7 L711.8,442.0 L712.0,425.9 L712.3,443.4 L712.5,422.1 L712.7,434.9 L712.9,432.8 L713.1,440.2 L713.4,430.5 L713.6,417.0 L713.8,433.9 L714.0,427.3 L714.2,432.8 L714.5,442.6 L714.7,426.1 L714.9,434.8 L715.1,440.5 L715.3,438.4 L715.6,439.6 L715.8,417.2 L716.0,423.5 L716.2,409.4 L716.4,436.9 L716.7,429.5 L716.9,417.7 L717.1,441.2 L717.3,411.3 L717.5,418.8 L717.8,425.5 L718.0,420.9 L718.2,440.5 L718.4,421.7 L718.6,429.7 L718.9,436.7 L719.1,449.7 L719.3,420.3 L719.5,416.0 L719.7,445.2 L720.0,423.8 L720.2,432.2 L720.4,420.6 L720.6,416.2 L720.8,439.0 L721.1,444.5 L721.3,415.8 L721.5,429.9 L721.7,418.8 L721.9,439.5 L722.2,435.7 L722.4,477.3 L722.6,446.7 L722.8,439.1 L723.0,437.5 L723.3,437.3 L723.5,442.4 L723.7,425.4 L723.9,419.2 L724.1,430.1 L724.4,428.5 L724.6,407.0 L724.8,456.4 L725.0,429.5 L725.2,437.2 L725.5,447.1 L725.7,418.4 L725.9,419.8 L726.1,441.1 L726.3,428.3 L726.6,442.1 L726.8,441.7 L727.0,455.9 L727.2,432.7 L727.4,436.1 L727.7,445.4 L727.9,419.1 L728.1,440.5 L728.3,429.9 L728.5,443.8 L728.8,437.7 L729.0,427.3 L729.2,438.0 L729.4,415.7 L729.6,437.2 L729.9,416.4 L730.1,444.8 L730.3,438.0 L730.5,420.3 L730.7,428.5 L731.0,414.1 L731.2,416.1 L731.4,434.8 L731.6,434.2 L731.8,433.1 L732.1,435.2 L732.3,416.8 L732.5,437.5 L732.7,405.7 L732.9,445.9 L733.2,423.8 L733.4,418.9 L733.6,418.1 L733.8,435.0 L734.0,427.4 L734.3,425.4 L734.5,439.6 L734.7,418.3 L734.9,435.0 L735.1,426.8 L735.4,427.8 L735.6,439.2 L735.8,419.3 L736.0,433.1 L736.2,432.6 L736.5,439.8 L736.7,423.7 L736.9,433.8 L737.1,445.6 L737.3,417.5 L737.6,466.4 L737.8,419.1 L738.0,444.7 L738.2,438.1 L738.4,426.6 L738.7,441.7 L738.9,414.9 L739.1,425.3 L739.3,414.4 L739.5,446.5 L739.8,428.8 L740.0,416.4 L740.2,425.3 L740.4,436.6 L740.6,431.0 L740.9,437.6 L741.1,421.9 L741.3,421.9 L741.5,440.2 L741.7,413.6 L742.0,423.6 L742.2,443.3 L742.4,417.2 L742.6,413.6 L742.8,399.8 L743.1,435.2 L743.3,429.5 L743.5,461.5 L743.7,434.8 L743.9,420.2 L744.2,423.0 L744.4,423.0 L744.6,425.5 L744.8,437.3 L745.0,451.4 L745.3,431.7 L745.5,442.2 L745.7,420.6 L745.9,445.4 L746.1,441.3 L746.4,439.1 L746.6,430.1 L746.8,431.6 L747.0,419.3 L747.2,403.5 L747.5,439.9 L747.7,440.2 L747.9,415.4 L748.1,419.8 L748.3,442.3 L748.6,416.3 L748.8,441.0 L749.0,429.8 L749.2,414.8 L749.4,436.3 L749.7,415.4 L749.9,430.4 L750.1,421.1 L750.3,424.1 L750.5,435.6 L750.8,427.9 L751.0,425.1 L751.2,415.1 L751.4,443.2 L751.6,434.3 L751.9,475.5 L752.1,436.8 L752.3,427.5 L752.5,400.1 L752.7,442.1 L753.0,415.2 L753.2,430.5 L753.4,439.8 L753.6,442.0 L753.8,437.6 L754.1,460.6 L754.3,442.6 L754.5,412.0 L754.7,450.5 L754.9,415.9 L755.2,417.8 L755.4,444.1 L755.6,443.7 L755.8,428.1 L756.0,415.3 L756.3,440.1 L756.5,413.7 L756.7,403.2 L756.9,419.1 L757.1,436.0 L757.4,405.1 L757.6,432.0 L757.8,442.1 L758.0,469.7 L758.2,434.5 L758.5,420.1 L758.7,444.2 L758.9,438.1 L759.1,415.8 L759.3,432.2 L759.6,421.2 L759.8,422.5 L760.0,445.4 L760.2,439.0 L760.4,446.3 L760.7,436.7 L760.9,455.6 L761.1,429.9 L761.3,455.7 L761.5,439.5 L761.8,432.0 L762.0,420.1 L762.2,423.1 L762.4,442.9 L762.6,415.1 L762.9,411.4 L763.1,426.1 L763.3,425.3 L763.5,408.7 L763.7,431.3 L764.0,414.3 L764.2,445.6 L764.4,412.4 L764.6,424.4 L764.8,420.1 L765.1,423.1 L765.3,438.6 L765.5,405.1 L765.7,444.0 L765.9,419.6 L766.2,439.2 L766.4,430.6 L766.6,422.8 L766.8,414.4 L767.0,432.4 L767.3,417.6 L767.5,428.4 L767.7,434.8 L767.9,412.2 L768.1,418.3 L768.4,440.6 L768.6,436.0 L768.8,427.7 L769.0,415.0 L769.2,413.6 L769.5,442.0 L769.7,427.2 L769.9,427.6 L770.1,432.6 L770.3,419.4 L770.6,418.5 L770.8,412.2 L771.0,440.8 L771.2,410.8 L771.4,414.9 L771.7,419.3 L771.9,445.4 L772.1,437.5 L772.3,425.9 L772.5,429.6 L772.8,444.8 L773.0,437.0 L773.2,439.3 L773.4,440.5 L773.6,407.5 L773.9,431.7 L774.1,432.8 L774.3,430.4 L774.5,418.7 L774.7,425.9 L775.0,416.3 L775.2,425.9 L775.4,432.9 L775.6,430.7 L775.8,446.3 L776.1,427.7 L776.3,420.7 L776.5,431.2 L776.7,404.5 L776.9,417.7 L777.2,439.1 L777.4,438.1 L777.6,413.7 L777.8,435.7 L778.0,437.3 L778.3,455.5 L778.5,412.4 L778.7,432.7 L778.9,430.0 L779.1,446.9 L779.4,429.5 L779.6,433.3 L779.8,416.3 L780.0,429.3 L780.2,437.9 L780.5,415.1 L780.7,399.1 L780.9,418.7 L781.1,416.0 L781.3,446.1 L781.6,414.8 L781.8,431.9 L782.0,445.9 L782.2,439.2 L782.4,422.5 L782.7,430.5 L782.9,423.5 L783.1,432.6 L783.3,425.3 L783.5,417.9 L783.8,399.9 L784.0,484.8 L784.2,447.2 L784.4,416.2 L784.6,446.8 L784.9,440.3 L785.1,426.4 L785.3,439.2 L785.5,475.2 L785.7,441.0 L786.0,410.2 L786.2,407.4 L786.4,416.9 L786.6,463.9 L786.8,426.1 L787.1,438.4 L787.3,455.8 L787.5,414.4 L787.7,425.9 L787.9,440.4 L788.2,435.3 L788.4,429.1 L788.6,422.3 L788.8,442.3 L789.0,433.9 L789.3,421.7 L789.5,424.5 L789.7,425.2 L789.9,429.5 L790.1,427.2 L790.4,434.4 L790.6,420.2 L790.8,433.3 L791.0,440.0 L791.2,424.3 L791.5,412.5 L791.7,442.5 L791.9,447.3 L792.1,440.4 L792.3,414.6 L792.6,433.0 L792.8,426.1 L793.0,448.2 L793.2,423.2 L793.4,425.9 L793.7,437.1 L793.9,418.5 L794.1,444.2 L794.3,438.9 L794.5,432.8 L794.8,410.1 L795.0,436.4 L795.2,410.7 L795.4,435.9 L795.6,414.5 L795.9,412.1 L796.1,441.9 L796.3,418.3 L796.5,446.2 L796.7,416.0 L797.0,407.8 L797.2,424.3 L797.4,412.5 L797.6,439.4 L797.8,441.6 L798.1,434.8 L798.3,423.4 L798.5,424.4 L798.7,410.2 L798.9,438.7 L799.2,413.0 L799.4,422.4 L799.6,419.3 L799.8,430.4 L800.0,430.3 L800.3,449.7 L800.5,434.1 L800.7,415.2 L800.9,420.6 L801.1,427.6 L801.4,438.6 L801.6,416.8 L801.8,410.7 L802.0,434.0 L802.2,432.0 L802.5,410.2 L802.7,431.9 L802.9,419.2 L803.1,418.2 L803.3,440.0 L803.6,419.9 L803.8,446.2 L804.0,440.1 L804.2,425.2 L804.4,407.5 L804.7,414.9 L804.9,414.4 L805.1,419.7 L805.3,415.1 L805.5,445.1 L805.8,430.3 L806.0,424.3 L806.2,428.1 L806.4,420.9 L806.6,417.6 L806.9,440.5 L807.1,430.3 L807.3,465.1 L807.5,406.2 L807.7,441.1 L808.0,435.4 L808.2,422.7 L808.4,446.2 L808.6,430.7 L808.8,417.5 L809.1,443.9 L809.3,442.9 L809.5,436.5 L809.7,435.5 L809.9,432.5 L810.2,433.4 L810.4,428.7 L810.6,443.5 L810.8,408.1 L811.0,418.5 L811.3,449.2 L811.5,442.7 L811.7,446.5 L811.9,441.5 L812.1,424.1 L812.4,429.2 L812.6,438.6 L812.8,433.2 L813.0,413.9 L813.2,446.6 L813.5,446.1 L813.7,432.4 L813.9,428.2 L814.1,450.1 L814.3,432.9 L814.6,411.5 L814.8,420.1 L815.0,445.0 L815.2,439.2 L815.4,429.5 L815.7,412.3 L815.9,422.9 L816.1,434.3 L816.3,475.4 L816.5,439.3 L816.8,401.4 L817.0,418.2 L817.2,435.2 L817.4,434.9 L817.6,410.0 L817.9,449.3 L818.1,475.4 L818.3,441.9 L818.5,422.8 L818.7,448.4 L819.0,426.9 L819.2,433.7 L819.4,424.4 L819.6,412.1 L819.8,428.1 L820.1,411.3 L820.3,424.8 L820.5,410.8 L820.7,422.3 L820.9,433.5 L821.2,449.2 L821.4,443.9 L821.6,439.3 L821.8,425.0 L822.0,442.3 L822.3,441.2 L822.5,440.8 L822.7,447.5 L822.9,434.8 L823.1,439.6 L823.4,418.7 L823.6,448.3 L823.8,413.3 L824.0,426.3 L824.2,449.2 L824.5,419.9 L824.7,409.7 L824.9,446.3 L825.1,425.3 L825.3,412.1 L825.6,434.1 L825.8,426.5 L826.0,429.4 L826.2,422.8 L826.4,436.0 L826.7,420.1 L826.9,442.3 L827.1,435.3 L827.3,445.7 L827.5,419.2 L827.8,438.9 L828.0,443.5 L828.2,437.8 L828.4,425.8 L828.6,427.1 L828.9,423.8 L829.1,412.3 L829.3,421.9 L829.5,431.9 L829.7,436.7 L830.0,428.7 L830.2,413.3 L830.4,426.0 L830.6,421.1 L830.8,442.6 L831.1,403.0 L831.3,437.7 L831.5,423.3 L831.7,440.5 L831.9,441.4 L832.2,427.1 L832.4,413.7 L832.6,421.1 L832.8,418.0 L833.0,393.0 L833.3,428.3 L833.5,440.8 L833.7,410.0 L833.9,435.0 L834.1,414.4 L834.4,447.3 L834.6,433.7 L834.8,401.0 L835.0,435.0 L835.2,425.6 L835.5,427.1 L835.7,471.4 L835.9,449.0 L836.1,435.8 L836.3,429.9 L836.6,441.9 L836.8,410.0 L837.0,417.4 L837.2,442.3 L837.4,408.6 L837.7,422.9 L837.9,441.5 L838.1,442.9 L838.3,419.9 L838.5,412.6 L838.8,445.7 L839.0,422.8 L839.2,425.3 L839.4,403.7 L839.6,424.2 L839.9,410.2 L840.1,428.0 L840.3,409.1 L840.5,413.1 L840.7,423.2 L841.0,423.7 L841.2,435.7 L841.4,443.9 L841.6,446.2 L841.8,443.9 L842.1,417.2 L842.3,447.8 L842.5,447.4 L842.7,429.5 L842.9,411.8 L843.2,422.7 L843.4,446.7 L843.6,411.9 L843.8,416.7 L844.0,480.4 L844.3,446.1 L844.5,438.6 L844.7,405.8 L844.9,445.4 L845.1,435.5 L845.4,434.3 L845.6,403.2 L845.8,437.0 L846.0,435.9 L846.2,430.1 L846.5,442.6 L846.7,417.4 L846.9,422.9 L847.1,427.9 L847.3,458.3 L847.6,428.6 L847.8,433.9 L848.0,418.5 L848.2,428.3 L848.4,454.5 L848.7,427.8 L848.9,432.4 L849.1,428.1 L849.3,409.2 L849.5,409.0 L849.8,416.0 L850.0,435.0 L850.2,423.5 L850.4,446.8 L850.6,429.8 L850.9,435.4 L851.1,403.4 L851.3,444.2 L851.5,428.6 L851.7,449.3 L852.0,438.4 L852.2,419.2 L852.4,429.1 L852.6,435.9 L852.8,415.0 L853.1,431.0 L853.3,448.6 L853.5,433.5 L853.7,417.0 L853.9,449.7 L854.2,451.1 L854.4,448.4 L854.6,442.3 L854.8,417.4 L855.0,433.4 L855.3,429.7 L855.5,433.2 L855.7,435.3 L855.9,421.9 L856.1,426.1 L856.4,443.5 L856.6,437.5 L856.8,443.5 L857.0,436.3 L857.2,446.0 L857.5,434.0 L857.7,419.8 L857.9,439.0 L858.1,412.0 L858.3,423.1 L858.6,419.1 L858.8,434.3 L859.0,408.9 L859.2,445.7 L859.4,454.6 L859.7,441.8 L859.9,427.5 L860.1,412.2 L860.3,395.7 L860.5,435.4 L860.8,413.3 L861.0,402.3 L861.2,427.3 L861.4,422.8 L861.6,478.4 L861.9,406.6 L862.1,432.4 L862.3,423.3 L862.5,449.1 L862.7,406.6 L863.0,417.9 L863.2,409.0 L863.4,430.0 L863.6,434.2 L863.8,437.1 L864.1,428.5 L864.3,419.6 L864.5,439.5 L864.7,443.7 L864.9,478.2 L865.2,444.6 L865.4,422.3 L865.6,438.9 L865.8,429.4 L866.0,438.7 L866.3,417.2 L866.5,448.1 L866.7,435.2 L866.9,432.4 L867.1,431.3 L867.4,424.3 L867.6,420.7 L867.8,417.7 L868.0,413.6 L868.2,441.4 L868.5,439.4 L868.7,417.0 L868.9,413.3 L869.1,481.2 L869.3,417.3 L869.6,458.0 L869.8,437.2 L870.0,432.2 L870.2,427.1 L870.4,425.4 L870.7,437.6 L870.9,424.4" fill="none" stroke="#006a6a" stroke-width="1.1"/><path d="M515.5,348.9 L516.0,348.9 L516.5,349.1 L517.0,350.2 L517.5,350.1 L518.0,350.4 L518.5,350.5 L519.0,350.5 L519.5,351.2 L520.0,351.2 L520.5,351.7 L521.0,351.8 L521.5,352.3 L522.0,352.0 L522.5,351.9 L523.0,352.1 L523.5,353.1 L524.0,352.6 L524.5,353.5 L525.0,353.7 L525.5,353.2 L526.0,354.4 L526.5,353.6 L527.0,355.0 L527.5,355.2 L528.0,354.6 L528.5,355.5 L529.0,355.8 L529.5,355.2 L530.0,356.2 L530.5,355.6 L531.0,357.0 L531.5,356.9 L532.0,357.6 L532.5,356.5 L533.0,357.1 L533.5,357.8 L534.0,358.0 L534.5,357.6 L535.0,358.9 L535.5,359.1 L536.0,358.5 L536.5,358.5 L537.0,359.5 L537.5,359.4 L538.0,360.0 L538.5,360.0 L539.0,360.1 L539.5,359.7 L540.0,360.1 L540.5,360.9 L541.0,361.5 L541.5,361.3 L542.0,362.0 L542.5,362.0 L543.0,362.7 L543.5,362.6 L544.0,362.3 L544.5,362.3 L545.0,362.4 L545.5,362.6 L546.0,364.2 L546.5,364.4 L547.0,364.5 L547.5,363.6 L548.0,364.8 L548.5,364.1 L549.0,365.7 L549.5,365.5 L550.0,366.0 L550.5,366.0 L551.0,366.0 L551.5,367.0 L552.0,367.5 L552.5,366.6 L553.0,367.2 L553.5,368.0 L554.0,368.2 L554.5,368.0 L555.0,368.3 L555.5,369.5 L556.0,368.6 L556.5,368.8 L557.0,369.9 L557.5,369.5 L558.0,370.9 L558.5,370.1 L559.0,371.5 L559.5,370.8 L560.0,372.0 L560.5,372.0 L561.0,372.3 L561.5,371.6 L562.0,371.8 L562.5,371.8 L563.0,372.4 L563.5,373.6 L564.0,372.7 L564.5,373.4 L565.0,374.3 L565.5,373.8 L566.0,374.4 L566.5,374.5 L567.0,375.6 L567.5,374.8 L568.0,376.8 L568.5,376.3 L569.0,376.8 L569.5,376.8 L570.0,377.0 L570.5,378.2 L571.0,390.0 L571.5,378.5 L572.0,377.2 L572.5,378.6 L573.0,379.6 L573.5,379.3 L574.0,379.3 L574.5,379.9 L575.0,379.2 L575.5,380.7 L576.0,381.1 L576.5,379.9 L577.0,381.1 L577.5,381.5 L578.0,381.3 L578.5,382.3 L579.0,383.1 L579.5,383.4 L580.0,382.4 L580.5,382.3 L581.0,384.1 L581.5,383.9 L582.0,384.7 L582.5,385.0 L583.0,384.0 L583.5,385.0 L584.0,384.7 L584.5,386.0 L585.0,386.1 L585.5,385.4 L586.0,386.3 L586.5,386.8 L587.0,386.3 L587.5,386.4 L588.0,387.4 L588.5,386.8 L589.0,388.0 L589.5,389.5 L590.0,397.0 L590.5,388.4 L591.0,390.6 L591.5,390.8 L592.0,391.3 L592.5,386.0 L593.0,392.3 L593.5,391.5 L594.0,393.3 L594.5,392.7 L595.0,393.3 L595.5,393.3 L596.0,395.4 L596.5,394.3 L597.0,396.3 L597.5,395.9 L598.0,395.5 L598.5,397.2 L599.0,397.4 L599.5,396.6 L600.0,399.0 L600.5,398.1 L601.0,397.9 L601.5,400.3 L602.0,400.7 L602.5,400.2 L603.0,400.1 L603.5,401.1 L604.0,401.4 L604.5,401.8 L605.0,401.2 L605.5,401.5 L606.0,402.1 L606.5,400.3 L607.0,400.3 L607.5,401.4 L608.0,402.5 L608.5,402.8 L609.0,403.0 L609.5,401.4 L610.0,402.6 L610.5,400.1 L611.0,401.4 L611.5,400.0 L612.0,403.4 L612.5,404.3 L613.0,402.8 L613.5,403.3 L614.0,401.5 L614.5,403.7 L615.0,400.2 L615.5,401.6 L616.0,401.5 L616.5,404.6 L617.0,400.4 L617.5,400.2 L618.0,399.7 L618.5,405.2 L619.0,401.2 L619.5,406.0 L620.0,401.2 L620.2,405.7 L620.5,400.1 L620.8,406.5 L621.0,407.3 L621.2,406.5 L621.5,404.8 L621.8,406.8 L622.0,407.1 L622.2,408.1 L622.5,401.6 L622.8,408.0 L623.0,407.8 L623.2,403.7 L623.5,402.2 L623.8,410.7 L624.0,406.4 L624.2,407.5 L624.5,412.1 L624.8,407.9 L625.0,405.6 L625.2,411.3 L625.5,406.8 L625.8,414.8 L626.0,414.2 L626.2,411.2 L626.5,413.4 L626.8,408.8 L627.0,428.1 L627.2,418.8 L627.5,412.1 L627.8,431.0 L628.0,410.9 L628.2,413.6 L628.5,414.5 L628.8,409.9 L629.0,413.5 L629.2,412.3 L629.5,411.5 L629.8,422.6 L630.0,418.6 L630.2,420.2 L630.5,436.8 L630.8,422.9 L631.0,420.6 L631.2,424.2 L631.5,443.0 L631.8,419.9 L632.0,418.5 L632.2,413.8 L632.5,441.7 L632.8,425.3 L633.0,421.0 L633.2,420.4 L633.5,426.8 L633.8,426.4 L634.0,421.8 L634.2,419.2 L634.5,428.3 L634.8,419.5 L635.0,417.5 L635.2,418.7 L635.5,418.0 L635.8,420.6 L636.0,427.7 L636.2,420.0 L636.5,419.9 L636.8,418.4 L637.0,419.6 L637.2,430.6 L637.5,448.7 L637.8,423.4 L638.0,420.7 L638.2,431.1 L638.5,421.3 L638.8,426.0 L639.0,433.0 L639.2,424.5 L639.5,425.4 L639.8,424.2 L640.0,431.0 L640.2,423.1 L640.5,430.6 L640.8,430.1 L641.0,422.5 L641.2,420.9 L641.5,423.0 L641.8,452.0 L642.0,452.0 L642.2,452.0 L642.5,428.6 L642.8,432.1 L643.0,426.5 L643.2,421.2 L643.5,425.4 L643.8,442.4 L644.0,423.4 L644.2,431.3 L644.5,425.5 L644.8,432.2 L645.0,425.6 L645.2,431.5 L645.5,432.2 L645.8,429.2 L646.0,420.4 L646.2,431.1 L646.5,420.5 L646.8,427.0 L647.0,425.3 L647.2,428.6 L647.5,425.4 L647.8,422.5 L648.0,432.8 L648.2,419.8 L648.5,429.9 L648.8,435.4 L649.0,425.1 L649.2,422.1 L649.5,434.3 L649.8,418.9 L650.0,424.0 L650.2,428.1 L650.5,418.3 L650.8,458.0 L651.0,458.0 L651.2,458.0 L651.5,418.9 L651.8,419.0 L652.0,425.4 L652.2,419.1 L652.5,429.4 L652.8,426.6 L653.0,426.4 L653.2,429.4 L653.5,441.6 L653.8,427.8 L654.0,426.6 L654.2,425.6 L654.5,427.0 L654.8,416.8 L655.0,423.6 L655.2,421.3 L655.5,419.9 L655.8,436.1 L656.0,421.8 L656.2,422.6 L656.5,421.0 L656.8,424.3 L657.0,422.7 L657.2,418.2 L657.5,425.4 L657.8,420.1 L658.0,415.6 L658.2,414.8 L658.5,420.9 L658.8,419.2 L659.0,412.1 L659.2,422.5 L659.5,416.4 L659.8,423.3 L660.0,422.8 L660.2,425.4 L660.5,413.1 L660.8,421.4 L661.0,422.5 L661.2,424.0 L661.5,420.4 L661.8,411.5 L662.0,411.6 L662.2,425.9 L662.5,421.5 L662.8,416.1 L663.0,424.4 L663.2,416.2 L663.5,421.2 L663.8,423.2 L664.0,424.2 L664.2,423.0 L664.5,422.4 L664.8,423.4 L665.0,425.8 L665.2,424.7 L665.5,422.7 L665.8,415.4 L666.0,423.3 L666.2,424.9 L666.5,422.8 L666.8,421.6 L667.0,429.5 L667.2,421.3 L667.5,417.0 L667.8,412.5 L668.0,411.9 L668.2,412.0 L668.5,424.6 L668.8,425.0 L669.0,420.8 L669.2,412.4 L669.5,412.4 L669.8,412.9 L670.0,424.4 L670.2,419.1 L670.5,413.0 L670.8,421.4 L671.0,422.0 L671.2,414.4 L671.5,416.2 L671.8,421.4 L672.0,420.7 L672.2,424.1 L672.5,411.1 L672.8,413.7 L673.0,419.5 L673.2,414.7 L673.5,413.2 L673.8,417.7 L674.0,416.5 L674.2,421.3 L674.5,415.0 L674.8,426.5 L675.0,415.8 L675.2,418.2 L675.5,424.0 L675.8,424.2 L676.0,425.1 L676.2,415.6 L676.5,422.8 L676.8,423.1 L677.0,412.2 L677.2,438.3 L677.5,425.9 L677.8,419.6 L678.0,415.4 L678.2,422.5 L678.5,426.3 L678.8,417.0 L679.0,424.6 L679.2,420.0 L679.5,420.4 L679.8,434.6 L680.0,427.7 L680.2,418.4 L680.5,425.5 L680.8,428.4 L681.0,431.1 L681.2,429.5 L681.5,418.7 L681.8,420.7 L682.0,430.2 L682.2,436.6 L682.5,433.3 L682.8,431.1 L683.0,421.7 L683.2,429.4 L683.5,434.1 L683.8,435.3 L684.0,427.1 L684.2,434.6 L684.5,431.2 L684.8,437.7 L685.0,429.6 L685.2,423.8 L685.5,426.5 L685.8,436.7 L686.0,427.1 L686.2,438.8 L686.5,439.7 L686.8,429.5 L687.0,435.6 L687.2,439.6 L687.5,431.4 L687.8,439.2 L688.0,432.1 L688.2,435.7 L688.5,439.7 L688.8,435.8 L689.0,432.4 L689.2,444.1 L689.5,435.2 L689.8,435.2 L690.0,439.1 L690.2,436.4 L690.5,465.0 L690.8,431.8 L691.0,431.5 L691.2,434.6 L691.5,431.4 L691.8,447.2 L692.0,438.8 L692.2,444.9 L692.5,438.9 L692.8,445.2 L693.0,448.3 L693.2,437.7 L693.5,449.3 L693.8,437.9 L694.0,463.4 L694.2,441.4 L694.5,446.2 L694.8,435.3 L695.0,440.5 L695.2,445.9 L695.5,442.0 L695.8,444.2 L696.0,444.3 L696.2,435.8 L696.5,451.4 L696.8,445.1 L697.0,441.3 L697.2,439.2 L697.5,444.8 L697.8,446.0 L698.0,453.0 L698.2,442.7 L698.5,440.0 L698.8,447.8 L699.0,446.8 L699.2,450.3 L699.5,451.1 L699.8,439.0 L700.0,441.0 L700.2,439.9 L700.5,447.4 L700.8,452.2 L701.0,442.1 L701.2,445.4 L701.5,442.1 L701.8,458.2 L702.0,446.7 L702.2,450.0 L702.5,447.3 L702.8,441.1 L703.0,446.0 L703.2,441.7 L703.5,444.4 L703.8,447.4 L704.0,451.2 L704.2,466.3 L704.5,442.5 L704.8,446.6 L705.0,447.7 L705.2,439.5 L705.5,438.2 L705.8,454.6 L706.0,441.1 L706.2,443.2 L706.5,452.1 L706.8,437.8 L707.0,444.1 L707.2,443.8 L707.5,444.2 L707.8,453.6 L708.0,447.5 L708.2,444.4 L708.5,457.2 L708.8,437.4 L709.0,442.7 L709.2,436.3 L709.5,440.0 L709.8,442.4 L710.0,451.7 L710.2,444.5 L710.5,439.5 L710.8,444.8 L711.0,438.6 L711.2,441.2 L711.5,437.4 L711.8,451.4 L712.0,466.5 L712.2,439.6 L712.5,433.6 L712.8,439.7 L713.0,441.7 L713.2,432.3 L713.5,441.0 L713.8,433.2 L714.0,434.4 L714.2,433.8 L714.5,443.0 L714.8,442.5 L715.0,440.3 L715.2,437.4 L715.5,443.3 L715.8,436.9 L716.0,432.9 L716.2,433.7 L716.5,439.0 L716.8,460.4 L717.0,434.8 L717.2,435.9 L717.5,434.6 L717.8,437.0 L718.0,443.7 L718.2,460.6 L718.5,435.7 L718.8,441.9 L719.0,426.7 L719.2,443.8 L719.5,434.6 L719.8,439.5 L720.0,441.8 L720.2,437.1 L720.5,431.8 L720.8,439.1 L721.0,437.2 L721.2,448.6 L721.5,434.7 L721.8,429.7 L722.0,431.0 L722.2,426.8 L722.5,424.5 L722.8,428.0 L723.0,432.2 L723.2,436.0 L723.5,433.3 L723.8,440.8 L724.0,439.1 L724.2,434.3 L724.5,435.7 L724.8,438.9 L725.0,439.7 L725.2,425.8 L725.5,435.6 L725.8,429.0 L726.0,422.3 L726.2,426.2 L726.5,423.5 L726.8,437.8 L727.0,435.9 L727.2,422.2 L727.5,427.8 L727.8,437.8 L728.0,433.0 L728.2,432.0 L728.5,424.4 L728.8,430.2 L729.0,428.8 L729.2,437.2 L729.5,422.0 L729.8,455.9 L730.0,428.9 L730.2,431.3 L730.5,432.0 L730.8,431.3 L731.0,427.4 L731.2,424.0 L731.5,427.0 L731.8,436.7 L732.0,433.4 L732.2,426.9 L732.5,435.5 L732.8,448.4 L733.0,435.1 L733.2,434.5 L733.5,432.3 L733.8,430.9 L734.0,422.2 L734.2,426.9 L734.5,422.8 L734.8,439.3 L735.0,429.6 L735.2,427.6 L735.5,438.0 L735.8,427.2 L736.0,426.2 L736.2,436.3 L736.5,421.2 L736.8,434.8 L737.0,426.7 L737.2,428.7 L737.5,429.6 L737.8,446.8 L738.0,423.9 L738.2,429.7 L738.5,437.3 L738.8,437.9 L739.0,427.8 L739.2,437.0 L739.5,432.5 L739.8,441.8 L740.0,425.5 L740.2,426.9 L740.5,427.0 L740.8,432.7 L741.0,425.9 L741.2,431.2 L741.5,423.6 L741.8,431.9 L742.0,434.6 L742.2,434.3 L742.5,440.8 L742.8,434.5 L743.0,431.9 L743.2,427.1 L743.5,426.3 L743.8,433.0 L744.0,435.8 L744.2,430.0 L744.5,425.3 L744.8,440.2 L745.0,429.8 L745.2,430.6 L745.5,435.5 L745.8,442.3 L746.0,435.3 L746.2,434.7 L746.5,430.8 L746.8,427.8 L747.0,429.8 L747.2,444.3 L747.5,431.9 L747.8,427.7 L748.0,439.2 L748.2,434.4 L748.5,433.1 L748.8,445.4 L749.0,447.0 L749.2,450.4 L749.5,437.2 L749.8,438.5 L750.0,441.0 L750.2,445.3 L750.5,445.8 L750.8,453.2 L751.0,429.4 L751.2,432.7 L751.5,443.0 L751.8,437.4 L752.0,430.3 L752.2,434.9 L752.5,442.9 L752.8,449.9 L753.0,433.6 L753.2,432.7 L753.5,431.2 L753.8,446.8 L754.0,442.2 L754.2,445.3 L754.5,450.0 L754.8,449.7 L755.0,435.8 L755.2,439.6 L755.5,447.9 L755.8,445.8 L756.0,431.4 L756.2,449.6 L756.5,433.2 L756.8,446.4 L757.0,439.3 L757.2,447.9 L757.5,440.0 L757.8,442.0 L758.0,434.6 L758.2,437.4 L758.5,436.2 L758.8,449.9 L759.0,439.4 L759.2,443.8 L759.5,445.5 L759.8,435.9 L760.0,457.4 L760.2,452.1 L760.5,448.3 L760.8,435.7 L761.0,449.4 L761.2,444.0 L761.5,445.1 L761.8,435.0 L762.0,444.4 L762.2,447.5 L762.5,435.2 L762.8,432.6 L763.0,442.5 L763.2,441.3 L763.5,432.9 L763.8,450.0 L764.0,445.9 L764.2,444.2 L764.5,447.3 L764.8,447.3 L765.0,435.8 L765.2,443.1 L765.5,431.1 L765.8,437.2 L766.0,430.2 L766.2,433.4 L766.5,435.2 L766.8,444.8 L767.0,434.5 L767.2,433.3 L767.5,446.9 L767.8,438.9 L768.0,437.9 L768.2,426.7 L768.5,433.5 L768.8,438.2 L769.0,434.4 L769.2,426.6 L769.5,437.3 L769.8,444.6 L770.0,426.3 L770.2,436.4 L770.5,424.9 L770.8,425.8 L771.0,439.9 L771.2,423.8 L771.5,442.8 L771.8,440.4 L772.0,424.0 L772.2,429.7 L772.5,440.5 L772.8,444.2 L773.0,426.2 L773.2,441.4 L773.5,443.8 L773.8,440.8 L774.0,438.7 L774.2,434.8 L774.5,437.1 L774.8,441.0 L775.0,430.7 L775.2,439.0 L775.5,460.0 L775.8,434.9 L776.0,445.3 L776.2,445.6 L776.5,441.7 L776.8,424.9 L777.0,435.5 L777.2,436.0 L777.5,427.1 L777.8,444.0 L778.0,437.8 L778.2,438.6 L778.5,445.5 L778.8,445.6 L779.0,428.3 L779.2,426.8 L779.5,433.2 L779.8,445.3 L780.0,438.7 L780.2,442.9 L780.5,437.9 L780.8,432.4 L781.0,430.9 L781.2,438.9 L781.5,443.9 L781.8,442.5 L782.0,442.8 L782.2,439.3 L782.5,429.8 L782.8,433.2 L783.0,435.6 L783.2,434.6 L783.5,447.2 L783.8,432.1 L784.0,437.1 L784.2,433.0 L784.5,434.1 L784.8,446.1 L785.0,436.0 L785.2,426.3 L785.5,441.5 L785.8,440.7 L786.0,435.1 L786.2,447.0 L786.5,428.2 L786.8,437.4 L787.0,429.3 L787.2,448.1 L787.5,445.1 L787.8,443.4 L788.0,431.3 L788.2,443.7 L788.5,427.4 L788.8,442.8 L789.0,446.0 L789.2,427.9 L789.5,430.1 L789.8,456.9 L790.0,431.8 L790.2,428.7 L790.5,431.5 L790.8,446.6 L791.0,437.5 L791.2,439.9 L791.5,442.5 L791.8,444.4 L792.0,439.1 L792.2,431.0 L792.5,433.5 L792.8,449.9 L793.0,445.2 L793.2,447.1 L793.5,433.4 L793.8,441.9 L794.0,443.7 L794.2,446.0 L794.5,435.8 L794.8,442.2 L795.0,441.2 L795.2,452.6 L795.5,449.3 L795.8,443.4 L796.0,446.7 L796.2,441.4 L796.5,444.4 L796.8,449.0 L797.0,455.0 L797.2,448.4 L797.5,452.8 L797.8,453.4 L798.0,446.2 L798.2,448.3 L798.5,439.2 L798.8,452.9 L799.0,446.9 L799.2,450.3 L799.5,440.7 L799.8,442.7 L800.0,434.6 L800.2,435.0 L800.5,451.1 L800.8,462.1 L801.0,456.0 L801.2,454.1 L801.5,446.9 L801.8,452.8 L802.0,460.9 L802.2,433.7 L802.5,455.5 L802.8,446.9 L803.0,450.5 L803.2,445.3 L803.5,441.3 L803.8,450.7 L804.0,447.0 L804.2,458.1 L804.5,435.6 L804.8,465.6 L805.0,452.2 L805.2,448.2 L805.5,454.6 L805.8,435.2 L806.0,435.8 L806.2,442.0 L806.5,462.5 L806.8,436.1 L807.0,450.0 L807.2,458.3 L807.5,456.0 L807.8,446.3 L808.0,460.2 L808.2,452.8 L808.5,452.6 L808.8,447.9 L809.0,441.5 L809.2,451.3 L809.5,437.4 L809.8,446.9 L810.0,434.5 L810.2,440.0 L810.5,462.5 L810.8,441.2 L811.0,460.8 L811.2,456.6 L811.5,437.9 L811.8,453.4 L812.0,463.0 L812.2,439.3 L812.5,442.7 L812.8,460.3 L813.0,460.6 L813.2,462.5 L813.5,439.7 L813.8,435.1 L814.0,442.9 L814.2,457.3 L814.5,455.9 L814.8,463.3 L815.0,438.2 L815.2,452.4 L815.5,458.1 L815.8,462.3 L816.0,440.8 L816.2,435.3 L816.5,451.3 L816.8,451.0 L817.0,460.6 L817.2,438.1 L817.5,464.4 L817.8,459.6 L818.0,469.1 L818.2,439.4 L818.5,460.1 L818.8,461.7 L819.0,446.8 L819.2,447.6 L819.5,463.6 L819.8,437.5 L820.0,442.0 L820.2,458.6 L820.5,445.9 L820.8,463.7 L821.0,460.6 L821.2,460.0 L821.5,441.4 L821.8,460.4 L822.0,453.8 L822.2,437.6 L822.5,451.4 L822.8,435.2 L823.0,456.3 L823.2,454.2 L823.5,448.7 L823.8,447.9 L824.0,451.7 L824.2,464.5 L824.5,446.1 L824.8,439.4 L825.0,434.9 L825.2,435.9 L825.5,455.4 L825.8,456.8 L826.0,461.1 L826.2,434.9 L826.5,479.2 L826.8,458.7 L827.0,444.6 L827.2,438.2 L827.5,464.5 L827.8,438.6 L828.0,455.0 L828.2,458.8 L828.5,446.3 L828.8,441.0 L829.0,437.9 L829.2,453.9 L829.5,434.6 L829.8,444.0 L830.0,458.4 L830.2,452.4 L830.5,445.1 L830.8,437.2 L831.0,464.0 L831.2,439.9 L831.5,454.2 L831.8,436.9 L832.0,445.7 L832.2,458.3 L832.5,435.1 L832.8,453.4 L833.0,463.4 L833.2,449.2 L833.5,471.8 L833.8,452.1 L834.0,463.1 L834.2,462.0 L834.5,463.8 L834.8,463.2 L835.0,457.3 L835.2,463.1 L835.5,441.6 L835.8,458.6 L836.0,439.6 L836.2,457.1 L836.5,448.0 L836.8,445.8 L837.0,451.8 L837.2,449.6 L837.5,474.0 L837.8,455.5 L838.0,437.6 L838.2,436.2 L838.5,462.2 L838.8,444.8 L839.0,457.4 L839.2,457.1 L839.5,455.3 L839.8,455.6 L840.0,459.8 L840.2,436.1 L840.5,440.5 L840.8,454.3 L841.0,439.0 L841.2,453.9 L841.5,447.0 L841.8,456.8 L842.0,454.2 L842.2,436.4 L842.5,456.6 L842.8,457.7 L843.0,449.9 L843.2,439.3 L843.5,463.5 L843.8,442.9 L844.0,454.7 L844.2,458.2 L844.5,457.2 L844.8,453.4 L845.0,439.5 L845.2,482.9 L845.5,463.3 L845.8,450.2 L846.0,447.9 L846.2,455.6 L846.5,468.7 L846.8,437.6 L847.0,463.4 L847.2,445.4 L847.5,458.3 L847.8,439.6 L848.0,439.4 L848.2,444.6 L848.5,455.5 L848.8,457.4 L849.0,460.0 L849.2,458.6 L849.5,435.2 L849.8,442.3 L850.0,477.7 L850.2,438.1 L850.5,446.9 L850.8,451.3 L851.0,464.0 L851.2,455.1 L851.5,455.9 L851.8,462.1 L852.0,461.6 L852.2,457.2 L852.5,451.2 L852.8,462.3 L853.0,437.7 L853.2,479.8 L853.5,454.3 L853.8,445.4 L854.0,447.9 L854.2,456.9 L854.5,455.7 L854.8,450.0 L855.0,449.4 L855.2,453.7 L855.5,441.6 L855.8,455.7 L856.0,450.3 L856.2,464.1 L856.5,437.5 L856.8,454.8 L857.0,444.0 L857.2,459.7 L857.5,447.2 L857.8,440.2 L858.0,434.9 L858.2,458.0 L858.5,464.5 L858.8,452.3 L859.0,463.1 L859.2,448.2 L859.5,452.4 L859.8,436.0 L860.0,443.0 L860.2,449.1 L860.5,440.0 L860.8,443.2 L861.0,435.7 L861.2,462.1 L861.5,459.3 L861.8,459.0 L862.0,456.5 L862.2,476.7 L862.5,465.9 L862.8,457.7 L863.0,449.2 L863.2,449.5 L863.5,461.6 L863.8,439.8 L864.0,452.6 L864.2,443.0 L864.5,437.5 L864.8,443.1 L865.0,434.4 L865.2,459.6 L865.5,450.9 L865.8,456.8 L866.0,451.1 L866.2,444.7 L866.5,450.2 L866.8,483.8 L867.0,464.8 L867.2,461.7 L867.5,467.7 L867.8,434.4 L868.0,463.3 L868.2,437.6 L868.5,435.7 L868.8,457.6 L869.0,452.0 L869.2,448.8 L869.5,436.9 L869.8,434.6 L870.0,434.7 L870.2,471.2 L870.5,441.0 L870.8,457.5 L871.0,446.8" fill="none" stroke="#a000a0" stroke-width="1"/><polygon points="70.5,250.0 77,255.5 70.5,261.0" fill="#0000a0"/><polygon points="439.5,250.0 433,255.5 439.5,261.0" fill="#0000a0"/><polygon points="508.5,162.5 515,168 508.5,173.5" fill="#a00000"/><polygon points="878.5,162.5 872,168 878.5,173.5" fill="#a00000"/><polygon points="70.5,342.5 77,348 70.5,353.5" fill="#3a6a10"/><polygon points="439.5,342.5 433,348 439.5,353.5" fill="#3a6a10"/><polygon points="70.5,394.5 77,400 70.5,405.5" fill="#10a010"/><polygon points="439.5,394.5 433,400 439.5,405.5" fill="#10a010"/><polygon points="508.5,394.5 515,400 508.5,405.5" fill="#a000a0"/><polygon points="878.5,394.5 872,400 878.5,405.5" fill="#a000a0"/><path d="M195.5,377.5 H242.5 L248.5,384.5 L242.5,391.5 H195.5 Z" fill="#fff" stroke="#000" stroke-width="1"/><path d="M309.5,377.5 H269.5 L263.5,384.5 L269.5,391.5 H309.5 Z" fill="#fff" stroke="#000" stroke-width="1"/><g stroke="#f08080" stroke-width="1"><line x1="250" y1="384.5" x2="263" y2="384.5"/><line x1="256.5" y1="377" x2="256.5" y2="392"/></g></svg>
<div class="a m" style="left:434px;top:209px;color:#0000a0">1</div>
<div class="a m" style="left:435px;top:211px;color:#0070b0">5</div>
<div class="a m" style="left:873px;top:126px;color:#a00000">2</div>
<div class="a m" style="left:873px;top:175px;color:#0a3838">6</div>
<div class="a m" style="left:434px;top:343px;color:#10a010">3</div>
<div class="a m" style="left:873px;top:405px;color:#008080">8</div>
<div class="a m" style="left:873px;top:441px;color:#a000a0">4</div>
<div class="a m" style="left:80px;top:321px;color:#10a010">Delta Time (Tr7):  11.014 ps (3.3020 mm)</div>
<div class="a m" style="left:200px;top:380px;color:#10a010">Start</div>
<div class="a m" style="left:274px;top:380px;color:#10a010">Stop</div>
<div class="a" style="left:886px;top:41px;width:138px;height:663px;background:#4a4a4a"></div>
<div class="a" style="left:886px;top:42px;width:136px;height:43px;background:#33346a;border-left:1px solid #7070b0;border-top:1px solid #8a8ac0"></div>
<div class="a" style="left:886px;top:85px;width:137px;height:2px;background:#000"></div>
<div class="a s" style="left:886px;top:47px;width:137px;text-align:center;font-size:13px;line-height:18px;color:#fff">Clear Marker<br>Menu</div>
<div class="a" style="left:886px;top:87px;width:5px;height:420px;background:linear-gradient(90deg,#f4f4f4,#c4c4c4)"></div>
<div class="a" style="left:886px;top:87px;width:5px;height:18px;background:#ececec"></div>
<div class="a" style="left:886px;top:487px;width:5px;height:20px;background:#f0f0f0"></div>
<div class="a" style="left:891px;top:87px;width:131px;height:32px;background:#4e4e4e;border-top:1px solid #707070;border-left:1px solid #6a6a6a;border-bottom:1px solid #3a3a3a;color:#8a8a8a;font-size:13px;text-align:center;line-height:33px">All OFF</div>
<div class="a" style="left:891px;top:120px;width:133px;height:1px;background:#8080c8"></div>
<div class="a" style="left:891px;top:121px;width:133px;height:1px;background:#0a0a40"></div>


<div class="a" style="left:891px;top:119px;width:133px;height:389px;background:#000"></div>
<div class="a" style="left:891px;top:119px;width:133px;height:1px;background:#000"></div><div class="a" style="left:891px;top:120px;width:133px;height:1px;background:#8080c8"></div><div class="a" style="left:891px;top:121px;width:133px;height:1px;background:#0a0a40"></div>
<div class="sk" style="top:122px">Marker 1</div>
<div class="sk" style="top:157px">Marker 2</div>
<div class="sk" style="top:192px">Marker 3</div>
<div class="sk" style="top:227px">Marker 4</div>
<div class="sk" style="top:262px">Marker 5</div>
<div class="sk" style="top:297px">Marker 6</div>
<div class="sk" style="top:332px">Marker 7</div>
<div class="sk" style="top:367px">Marker 8</div>
<div class="sk" style="top:402px">Marker 9</div>
<div class="sk" style="top:437px">Ref Marker</div>
<div class="a" style="left:1022px;top:41px;width:2px;height:663px;background:#000"></div><div class="a" style="left:1021px;top:508px;width:1px;height:195px;background:#8a8a8a"></div>
<div class="a" style="left:891px;top:470px;width:133px;height:1px;background:#8080c8"></div>
<div class="a" style="left:891px;top:471px;width:133px;height:2px;background:#0a0a40"></div>
<div class="sk" style="top:474px;height:32px;color:#000">Return</div>

<div class="a" style="left:0;top:511px;width:885px;height:20px;background:#d8d8d8"></div>
<div class="a" style="left:2px;top:512px;width:882px;height:17px;background:#b4b4b4"></div>
<div class="a" style="left:2px;top:512px;width:16px;height:16px;background:#cacaca;border:1px solid #e0e0e0;border-right-color:#909090;border-bottom-color:#909090"></div>
<div class="a" style="left:0;top:529px;width:885px;height:2px;background:#111"></div><div class="a" style="left:0;top:511px;width:885px;height:1px;background:#e8e8e8"></div>
<div class="a s" style="left:6px;top:514px;font-size:12.5px;color:#000">1</div>
<div class="a s" style="left:21px;top:514px;font-size:12.5px;letter-spacing:-0.25px;color:#000">Start -6 ns</div>
<div class="a s" style="left:318px;top:514px;font-size:12.5px;letter-spacing:-0.25px;color:#000">IFBW 70 kHz</div>
<div class="a s" style="left:628px;top:514px;font-size:12.5px;letter-spacing:-0.25px;color:#000">Stop 54 ns</div>

<div class="a s" style="left:694px;top:512px;width:24px;height:16px;background:#383888;color:#fff;font-size:12.5px;line-height:16px;text-align:center;border:1px solid #e8e8e8;border-top-color:#e8e8e8">Sim</div>
<div class="a s" style="left:720px;top:512px;width:28px;height:16px;background:#383888;color:#fff;font-size:12.5px;line-height:16px;text-align:center;border:1px solid #e8e8e8;border-top-color:#e8e8e8">PExt</div>
<div class="a s" style="left:751px;top:512px;width:24px;height:16px;background:#383888;color:#fff;font-size:12.5px;line-height:16px;text-align:center;border:1px solid #e8e8e8;border-top-color:#e8e8e8">Cor</div>
<div class="a s" style="left:777px;top:512px;width:92px;height:16px;background:#82621e;color:#fff;font-size:12.5px;line-height:16px;text-align:center;border:1px solid #e8e8e8;border-top-color:#e8e8e8">TDR [Deskew]</div>
<div class="a s" style="left:871px;top:512px;width:10px;height:16px;background:#c8c8c8;color:#101040;font-size:12.5px;line-height:16px;text-align:center;border:1px solid #e8e8e8;border-top-color:#e8e8e8">!</div>
<div class="a" style="left:0;top:531px;width:885px;height:173px;background:#d4d4d4"></div>
<div class="a" style="left:3px;top:532px;width:881px;height:40px;background:#fff"></div>
<div class="a" style="left:885px;top:511px;width:1px;height:193px;background:#000"></div>
<div class="a" style="left:3px;top:572px;width:881px;height:129px;background:#f0f0f0"></div>
<div class="a" style="left:3px;top:572px;width:87px;height:129px;background:linear-gradient(90deg,#fcfcfc,#ececec)"></div>
<div class="a" style="left:3px;top:616px;width:86px;height:43px;background:linear-gradient(90deg,#7cc4e6 0%,#a8d8ee 45%,#eef6fa 90%)"></div>
<div class="a" style="left:3px;top:615px;width:86px;height:1px;background:#707070"></div>
<div class="a" style="left:3px;top:659px;width:86px;height:1px;background:#707070"></div>
<div class="a s" style="left:9px;top:587px;font-size:13px;font-weight:bold;color:#000;letter-spacing:1px">Setup</div>
<div class="a s" style="left:9px;top:631px;font-size:13px;font-weight:bold;color:#000;letter-spacing:1px">TDR/TDT</div>
<div class="a s" style="left:9px;top:674px;font-size:13px;font-weight:bold;color:#000;letter-spacing:1px">Eye/Mask</div>
<div class="a" style="left:0;top:701px;width:885px;height:2px;background:#f4f4f4"></div>
<div class="a s" style="left:10px;top:540px;font-size:11px;line-height:12.5px;font-weight:bold;color:#111;transform:scaleX(0.78);transform-origin:left top">E5071C<br>OPT.</div>
<div class="a s" style="left:43px;top:536px;font-size:31px;line-height:31px;color:#000;transform:scaleX(0.57);transform-origin:left top">TDR</div>

<div class="btn" style="left:102px;top:535px;width:68px;height:33px"></div><div class="a" style="left:150px;top:536px;width:1px;height:31px;background:#9a9a9a"></div><div class="a s" style="left:102px;top:536px;width:48px;text-align:center;font-size:13px;line-height:16px;color:#111">Trace<br>3</div><svg class="a" style="left:152.5px;top:545px" width="14" height="14"><polygon points="0,1 13,1 6.5,13" fill="#606060"/></svg>
<div class="btn" style="left:178px;top:535px;width:68px;height:33px"></div><div class="a" style="left:226px;top:536px;width:1px;height:31px;background:#9a9a9a"></div><div class="a s" style="left:178px;top:536px;width:48px;text-align:center;font-size:13px;line-height:16px;color:#111">Auto<br>Scale</div><svg class="a" style="left:228.5px;top:545px" width="14" height="14"><polygon points="0,1 13,1 6.5,13" fill="#606060"/></svg>
<div class="btn" style="left:269px;top:535px;width:69px;height:33px;background:linear-gradient(#c4c4c4,#9c9c9c);border-color:#606060;line-height:31px">Run</div>
<div class="btn" style="left:345px;top:535px;width:68px;height:33px;line-height:16px">Stop<br>Single</div>
<div class="btn" style="left:436px;top:535px;width:68px;height:33px"></div><div class="a" style="left:483px;top:536px;width:1px;height:31px;background:#9a9a9a"></div><div class="a s" style="left:436px;top:536px;width:47px;text-align:center;font-size:13px;line-height:16px;color:#111">Data<br>Mem</div><svg class="a" style="left:486.0px;top:545px" width="14" height="14"><polygon points="0,1 13,1 6.5,13" fill="#606060"/></svg>
<div class="btn" style="left:512px;top:535px;width:68px;height:33px"></div><div class="a" style="left:559px;top:536px;width:1px;height:31px;background:#9a9a9a"></div><div class="a s" style="left:512px;top:536px;width:47px;text-align:center;font-size:13px;line-height:16px;color:#111">Marker<br>6</div><svg class="a" style="left:562.0px;top:545px" width="14" height="14"><polygon points="0,1 13,1 6.5,13" fill="#606060"/></svg>
<div class="btn" style="left:588px;top:535px;width:68px;height:33px"></div><div class="a" style="left:635px;top:536px;width:1px;height:31px;background:#9a9a9a"></div><div class="a s" style="left:588px;top:536px;width:47px;text-align:center;font-size:13px;line-height:16px;color:#111">Marker<br>Search</div><svg class="a" style="left:638.0px;top:545px" width="14" height="14"><polygon points="0,1 13,1 6.5,13" fill="#606060"/></svg>
<div class="btn" style="left:683px;top:535px;width:68px;height:33px"></div><div class="a" style="left:730px;top:536px;width:1px;height:31px;background:#9a9a9a"></div><div class="a s" style="left:683px;top:536px;width:47px;text-align:center;font-size:13px;line-height:16px;color:#111"><span style="line-height:31px">File</span></div><svg class="a" style="left:733.0px;top:545px" width="14" height="14"><polygon points="0,1 13,1 6.5,13" fill="#606060"/></svg>
<div class="btn" style="left:758px;top:535px;width:35px;height:33px"></div>
<svg class="a" style="left:758px;top:535px" width="36" height="33"><polygon points="17.5,4.5 25.5,12 21,12 21,21 25.5,21 17.5,28.5 9.5,21 14,21 14,12 9.5,12" fill="#555"/></svg>
<div class="btn" style="left:800px;top:535px;width:35px;height:33px;font-size:24.5px;line-height:29px;color:#5a5a5a;font-weight:bold">?</div>
<div class="btn" style="left:842px;top:535px;width:35px;height:33px"></div>
<svg class="a" style="left:842px;top:535px" width="36" height="33"><g stroke="#4a4a4a" stroke-width="3.3"><line x1="9" y1="7.5" x2="26" y2="24.5"/><line x1="26" y1="7.5" x2="9" y2="24.5"/></g></svg>
<div class="a" style="left:101px;top:584px;width:177px;height:115px;border:1px solid #d0dae0;border-radius:3px"></div>
<div class="a s" style="left:107px;top:577px;padding:0 2px;background:#f0f0f0;font-size:12px;letter-spacing:-0.55px;color:#1a1a30">Horizontal</div>
<div class="a" style="left:289px;top:584px;width:177px;height:115px;border:1px solid #d0dae0;border-radius:3px"></div>
<div class="a s" style="left:295px;top:577px;padding:0 2px;background:#f0f0f0;font-size:12px;letter-spacing:-0.5px;color:#1a1a30">Vertical</div>
<svg class="a" style="left:109.5px;top:607.5px" width="68" height="68" viewBox="109.5 607.5 68 68"><defs><linearGradient id="kg143" x1="0" y1="0" x2="0" y2="1"><stop offset="0" stop-color="#fafafa"/><stop offset="0.45" stop-color="#e4e4e4"/><stop offset="1" stop-color="#a4a4a4"/></linearGradient></defs><circle cx="143.5" cy="641.5" r="31.5" fill="url(#kg143)" stroke="#b4b4b4" stroke-width="1.3"/><circle cx="143.5" cy="641.2" r="15" fill="#f4f4f4"/><circle cx="143.5" cy="640.5" r="13" fill="#5c5c5c" stroke="#8c8c8c" stroke-width="1.4"/><line x1="143.5" y1="612.5" x2="143.5" y2="624.0" stroke="#6a6a6a" stroke-width="1.8"/></svg>
<svg class="a" style="left:204px;top:613.5px" width="58" height="58" viewBox="204 613.5 58 58"><defs><linearGradient id="kg233" x1="0" y1="0" x2="0" y2="1"><stop offset="0" stop-color="#fafafa"/><stop offset="0.45" stop-color="#e4e4e4"/><stop offset="1" stop-color="#a4a4a4"/></linearGradient></defs><circle cx="233" cy="642.5" r="26.5" fill="url(#kg233)" stroke="#b4b4b4" stroke-width="1.3"/><circle cx="233" cy="642.2" r="13" fill="#f4f4f4"/><circle cx="233" cy="641.5" r="11" fill="#5c5c5c" stroke="#8c8c8c" stroke-width="1.4"/><line x1="233" y1="618.5" x2="233" y2="630.0" stroke="#6a6a6a" stroke-width="1.8"/></svg>
<svg class="a" style="left:298px;top:607.5px" width="68" height="68" viewBox="298 607.5 68 68"><defs><linearGradient id="kg332" x1="0" y1="0" x2="0" y2="1"><stop offset="0" stop-color="#fafafa"/><stop offset="0.45" stop-color="#e4e4e4"/><stop offset="1" stop-color="#a4a4a4"/></linearGradient></defs><circle cx="332" cy="641.5" r="31.5" fill="url(#kg332)" stroke="#b4b4b4" stroke-width="1.3"/><circle cx="332" cy="641.2" r="15" fill="#f4f4f4"/><circle cx="332" cy="640.5" r="13" fill="#5c5c5c" stroke="#8c8c8c" stroke-width="1.4"/><line x1="332" y1="612.5" x2="332" y2="624.0" stroke="#6a6a6a" stroke-width="1.8"/></svg>
<svg class="a" style="left:392.5px;top:613px" width="58" height="58" viewBox="392.5 613 58 58"><defs><linearGradient id="kg421" x1="0" y1="0" x2="0" y2="1"><stop offset="0" stop-color="#fafafa"/><stop offset="0.45" stop-color="#e4e4e4"/><stop offset="1" stop-color="#a4a4a4"/></linearGradient></defs><circle cx="421.5" cy="642" r="26.5" fill="url(#kg421)" stroke="#b4b4b4" stroke-width="1.3"/><circle cx="421.5" cy="641.7" r="13" fill="#f4f4f4"/><circle cx="421.5" cy="641" r="11" fill="#5c5c5c" stroke="#8c8c8c" stroke-width="1.4"/><line x1="421.5" y1="618" x2="421.5" y2="629.5" stroke="#6a6a6a" stroke-width="1.8"/></svg>
<svg class="a" style="left:0;top:0" width="1024" height="728"><path d="M107.0,604.0 L107.1,601.7 L107.2,600.5 L107.4,599.6 L107.5,598.8 L107.6,598.1 L107.7,597.5 L107.8,596.9 L107.9,596.5 L108.1,596.1 L108.2,595.7 L108.3,595.5 L108.4,595.3 L108.5,595.1 L108.7,595.0 L108.8,595.0 L108.9,595.0 L109.0,595.1 L109.1,595.3 L109.2,595.5 L109.4,595.7 L109.5,596.1 L109.6,596.5 L109.7,596.9 L109.8,597.5 L110.0,598.1 L110.1,598.8 L110.2,599.6 L110.3,600.5 L110.4,601.7 L110.5,604.0 L110.7,606.3 L110.8,607.5 L110.9,608.4 L111.0,609.2 L111.1,609.9 L111.3,610.5 L111.4,611.1 L111.5,611.5 L111.6,611.9 L111.7,612.3 L111.9,612.5 L112.0,612.7 L112.1,612.9 L112.2,613.0 L112.3,613.0 L112.4,613.0 L112.6,612.9 L112.7,612.7 L112.8,612.5 L112.9,612.3 L113.0,611.9 L113.2,611.5 L113.3,611.1 L113.4,610.5 L113.5,609.9 L113.6,609.2 L113.7,608.4 L113.9,607.5 L114.0,606.3 L114.1,604.0 L114.2,601.7 L114.3,600.5 L114.5,599.6 L114.6,598.8 L114.7,598.1 L114.8,597.5 L114.9,596.9 L115.0,596.5 L115.2,596.1 L115.3,595.7 L115.4,595.5 L115.5,595.3 L115.6,595.1 L115.8,595.0 L115.9,595.0 L116.0,595.0 L116.1,595.1 L116.2,595.3 L116.3,595.5 L116.5,595.7 L116.6,596.1 L116.7,596.5 L116.8,596.9 L116.9,597.5 L117.1,598.1 L117.2,598.8 L117.3,599.6 L117.4,600.5 L117.5,601.7 L117.7,604.0 L117.8,606.3 L117.9,607.5 L118.0,608.4 L118.1,609.2 L118.2,609.9 L118.4,610.5 L118.5,611.1 L118.6,611.5 L118.7,611.9 L118.8,612.3 L119.0,612.5 L119.1,612.7 L119.2,612.9 L119.3,613.0 L119.4,613.0 L119.5,613.0 L119.7,612.9 L119.8,612.7 L119.9,612.5 L120.0,612.3 L120.1,611.9 L120.3,611.5 L120.4,611.1 L120.5,610.5 L120.6,609.9 L120.7,609.2 L120.8,608.4 L121.0,607.5 L121.1,606.3 L121.2,604.0" fill="none" stroke="#222" stroke-width="2.0" stroke-linecap="round" stroke-linejoin="round"/><path d="M168.5,604.2 L168.6,602.8 L168.7,602.0 L168.8,601.4 L168.9,600.8 L169.1,600.4 L169.2,599.9 L169.3,599.5 L169.4,599.1 L169.5,598.8 L169.6,598.5 L169.7,598.2 L169.8,597.9 L170.0,597.6 L170.1,597.4 L170.2,597.1 L170.3,596.9 L170.4,596.7 L170.5,596.5 L170.6,596.4 L170.8,596.2 L170.9,596.1 L171.0,596.0 L171.1,595.9 L171.2,595.8 L171.3,595.7 L171.4,595.6 L171.5,595.6 L171.7,595.5 L171.8,595.5 L171.9,595.5 L172.0,595.5 L172.1,595.5 L172.2,595.6 L172.3,595.6 L172.4,595.7 L172.6,595.8 L172.7,595.9 L172.8,596.0 L172.9,596.1 L173.0,596.2 L173.1,596.4 L173.2,596.5 L173.3,596.7 L173.4,596.9 L173.6,597.1 L173.7,597.4 L173.8,597.6 L173.9,597.9 L174.0,598.2 L174.1,598.5 L174.2,598.8 L174.3,599.1 L174.5,599.5 L174.6,599.9 L174.7,600.4 L174.8,600.8 L174.9,601.4 L175.0,602.0 L175.1,602.8 L175.2,604.2 L175.4,605.7 L175.5,606.5 L175.6,607.1 L175.7,607.7 L175.8,608.1 L175.9,608.6 L176.0,609.0 L176.2,609.4 L176.3,609.7 L176.4,610.0 L176.5,610.3 L176.6,610.6 L176.7,610.9 L176.8,611.1 L176.9,611.4 L177.1,611.6 L177.2,611.8 L177.3,612.0 L177.4,612.1 L177.5,612.3 L177.6,612.4 L177.7,612.5 L177.8,612.6 L177.9,612.7 L178.1,612.8 L178.2,612.9 L178.3,612.9 L178.4,613.0 L178.5,613.0 L178.6,613.0 L178.7,613.0 L178.8,613.0 L179.0,612.9 L179.1,612.9 L179.2,612.8 L179.3,612.7 L179.4,612.6 L179.5,612.5 L179.6,612.4 L179.8,612.3 L179.9,612.1 L180.0,612.0 L180.1,611.8 L180.2,611.6 L180.3,611.4 L180.4,611.1 L180.5,610.9 L180.7,610.6 L180.8,610.3 L180.9,610.0 L181.0,609.7 L181.1,609.4 L181.2,609.0 L181.3,608.6 L181.4,608.1 L181.6,607.7 L181.7,607.1 L181.8,606.5 L181.9,605.7 L182.0,604.3" fill="none" stroke="#222" stroke-width="2.0" stroke-linecap="round" stroke-linejoin="round"/><path d="M295.5,604.2 L295.6,603.6 L295.7,603.3 L295.8,603.0 L295.9,602.8 L296.0,602.6 L296.1,602.4 L296.3,602.2 L296.4,602.1 L296.5,601.9 L296.6,601.8 L296.7,601.6 L296.8,601.5 L296.9,601.4 L297.0,601.3 L297.1,601.2 L297.2,601.1 L297.3,601.0 L297.4,600.9 L297.6,600.9 L297.7,600.8 L297.8,600.8 L297.9,600.7 L298.0,600.7 L298.1,600.6 L298.2,600.6 L298.3,600.5 L298.4,600.5 L298.5,600.5 L298.6,600.5 L298.8,600.5 L298.9,600.5 L299.0,600.5 L299.1,600.5 L299.2,600.5 L299.3,600.6 L299.4,600.6 L299.5,600.7 L299.6,600.7 L299.7,600.8 L299.8,600.8 L299.9,600.9 L300.1,600.9 L300.2,601.0 L300.3,601.1 L300.4,601.2 L300.5,601.3 L300.6,601.4 L300.7,601.5 L300.8,601.6 L300.9,601.8 L301.0,601.9 L301.1,602.1 L301.2,602.2 L301.4,602.4 L301.5,602.6 L301.6,602.8 L301.7,603.0 L301.8,603.3 L301.9,603.6 L302.0,604.2 L302.1,604.9 L302.2,605.2 L302.3,605.5 L302.4,605.7 L302.5,605.9 L302.6,606.1 L302.8,606.3 L302.9,606.4 L303.0,606.6 L303.1,606.7 L303.2,606.9 L303.3,607.0 L303.4,607.1 L303.5,607.2 L303.6,607.3 L303.7,607.4 L303.8,607.5 L303.9,607.6 L304.1,607.6 L304.2,607.7 L304.3,607.7 L304.4,607.8 L304.5,607.8 L304.6,607.9 L304.7,607.9 L304.8,608.0 L304.9,608.0 L305.0,608.0 L305.1,608.0 L305.2,608.0 L305.4,608.0 L305.5,608.0 L305.6,608.0 L305.7,608.0 L305.8,607.9 L305.9,607.9 L306.0,607.8 L306.1,607.8 L306.2,607.7 L306.3,607.7 L306.4,607.6 L306.6,607.6 L306.7,607.5 L306.8,607.4 L306.9,607.3 L307.0,607.2 L307.1,607.1 L307.2,607.0 L307.3,606.9 L307.4,606.7 L307.5,606.6 L307.6,606.4 L307.7,606.3 L307.9,606.1 L308.0,605.9 L308.1,605.7 L308.2,605.5 L308.3,605.2 L308.4,604.9 L308.5,604.3" fill="none" stroke="#222" stroke-width="2.0" stroke-linecap="round" stroke-linejoin="round"/><path d="M356.5,604.2 L356.6,602.8 L356.7,602.0 L356.8,601.4 L356.9,600.8 L357.1,600.4 L357.2,599.9 L357.3,599.5 L357.4,599.1 L357.5,598.8 L357.6,598.5 L357.7,598.2 L357.9,597.9 L358.0,597.6 L358.1,597.4 L358.2,597.1 L358.3,596.9 L358.4,596.7 L358.5,596.5 L358.6,596.4 L358.8,596.2 L358.9,596.1 L359.0,596.0 L359.1,595.9 L359.2,595.8 L359.3,595.7 L359.4,595.6 L359.5,595.6 L359.6,595.5 L359.8,595.5 L359.9,595.5 L360.0,595.5 L360.1,595.5 L360.2,595.6 L360.3,595.6 L360.4,595.7 L360.6,595.8 L360.7,595.9 L360.8,596.0 L360.9,596.1 L361.0,596.2 L361.1,596.4 L361.2,596.5 L361.3,596.7 L361.4,596.9 L361.6,597.1 L361.7,597.4 L361.8,597.6 L361.9,597.9 L362.0,598.2 L362.1,598.5 L362.2,598.8 L362.4,599.1 L362.5,599.5 L362.6,599.9 L362.7,600.4 L362.8,600.8 L362.9,601.4 L363.0,602.0 L363.1,602.8 L363.2,604.2 L363.4,605.7 L363.5,606.5 L363.6,607.1 L363.7,607.7 L363.8,608.1 L363.9,608.6 L364.0,609.0 L364.1,609.4 L364.3,609.7 L364.4,610.0 L364.5,610.3 L364.6,610.6 L364.7,610.9 L364.8,611.1 L364.9,611.4 L365.1,611.6 L365.2,611.8 L365.3,612.0 L365.4,612.1 L365.5,612.3 L365.6,612.4 L365.7,612.5 L365.8,612.6 L365.9,612.7 L366.1,612.8 L366.2,612.9 L366.3,612.9 L366.4,613.0 L366.5,613.0 L366.6,613.0 L366.7,613.0 L366.9,613.0 L367.0,612.9 L367.1,612.9 L367.2,612.8 L367.3,612.7 L367.4,612.6 L367.5,612.5 L367.6,612.4 L367.8,612.3 L367.9,612.1 L368.0,612.0 L368.1,611.8 L368.2,611.6 L368.3,611.4 L368.4,611.1 L368.5,610.9 L368.6,610.6 L368.8,610.3 L368.9,610.0 L369.0,609.7 L369.1,609.4 L369.2,609.0 L369.3,608.6 L369.4,608.1 L369.6,607.7 L369.7,607.1 L369.8,606.5 L369.9,605.7 L370.0,604.3" fill="none" stroke="#222" stroke-width="2.0" stroke-linecap="round" stroke-linejoin="round"/><polygon points="210,602 224,595.5 224,609" fill="#1a1a1a"/><polygon points="257,602 243,595.5 243,609" fill="#1a1a1a"/><polygon points="398,596.5 412,596.5 405,609.5" fill="#1a1a1a"/><polygon points="431,609.5 445,609.5 438,596.5" fill="#1a1a1a"/><rect x="181.5" y="631.5" width="20" height="20" fill="#000" stroke="#c8c8c8"/><line x1="186" y1="635" x2="186" y2="648" stroke="#f09020" stroke-width="2"/><path d="M187,641.5 H198 M194,637.5 L198,641.5 L194,645.5" fill="none" stroke="#80c0f0" stroke-width="1.5"/></svg>
<div class="a s" style="left:107px;top:679px;width:73px;height:19px;background:#000;border:1px solid #808080;color:#fff;font-size:12px;line-height:17px;padding-left:5px">6 nHz/div</div>
<div class="a s" style="left:197px;top:679px;width:73px;height:19px;background:#000;border:1px solid #808080;color:#fff;font-size:12px;line-height:17px;padding-left:5px">-6 nHz</div>
<div class="a s" style="left:295px;top:679px;width:73px;height:19px;background:#000;border:1px solid #808080;color:#fff;font-size:12px;line-height:17px;padding-left:5px">50 mdB/div</div>
<div class="a s" style="left:385px;top:679px;width:73px;height:19px;background:#000;border:1px solid #808080;color:#fff;font-size:12px;line-height:17px;padding-left:5px">50 mdB</div>
<div class="a" style="left:476px;top:594px;width:402px;height:107px;background:#f8f8f8;border:1px solid #a0a0a0"></div>
<div class="a s" style="left:568px;top:576px;width:89px;height:19px;background:linear-gradient(#f4f4f4,#dcdcdc);border:1px solid #a0a0a0;font-size:12px;line-height:19px;letter-spacing:-0.3px;text-align:center;color:#000">Gating</div>
<div class="a s" style="left:658px;top:576px;width:87px;height:19px;background:linear-gradient(#f4f4f4,#dcdcdc);border:1px solid #a0a0a0;font-size:12px;line-height:19px;letter-spacing:-0.5px;text-align:center;color:#000">Trace Control</div>
<div class="a s" style="left:476px;top:574px;width:94px;height:21px;background:#fff;border:1px solid #a0a0a0;border-bottom:none;font-size:12px;line-height:18px;letter-spacing:-0.5px;text-align:center;color:#000">Parameters</div>
<svg class="a" style="left:0;top:0" width="1024" height="728"><rect x="480" y="599" width="185" height="99" fill="#fff"/><rect x="481" y="649" width="45" height="24" fill="#5d8de6"/><g stroke="#b8b8b8" stroke-width="1" shape-rendering="crispEdges"><line x1="480.5" y1="599" x2="480.5" y2="698"/><line x1="526.5" y1="599" x2="526.5" y2="698"/><line x1="573.5" y1="599" x2="573.5" y2="698"/><line x1="619.5" y1="599" x2="619.5" y2="698"/><line x1="665.5" y1="599" x2="665.5" y2="698"/><line x1="480" y1="599.5" x2="665" y2="599.5"/><line x1="480" y1="624.5" x2="665" y2="624.5"/><line x1="480" y1="648.5" x2="665" y2="648.5"/><line x1="480" y1="673.5" x2="665" y2="673.5"/><line x1="480" y1="698.5" x2="665" y2="698.5"/></g></svg>
<div class="a s" style="left:480px;top:604px;width:46px;text-align:center;font-size:13px;color:#000">T11</div>
<div class="a s" style="left:526px;top:604px;width:47px;text-align:center;font-size:13px;color:#000">T12</div>
<div class="a s" style="left:573px;top:604px;width:46px;text-align:center;font-size:13px;color:#000">T13</div>
<div class="a s" style="left:619px;top:604px;width:46px;text-align:center;font-size:13px;color:#000">T14</div>
<div class="a s" style="left:480px;top:629px;width:46px;text-align:center;font-size:13px;color:#000">T21</div>
<div class="a s" style="left:526px;top:629px;width:47px;text-align:center;font-size:13px;color:#000">T22</div>
<div class="a s" style="left:573px;top:629px;width:46px;text-align:center;font-size:13px;color:#000">T23</div>
<div class="a s" style="left:619px;top:629px;width:46px;text-align:center;font-size:13px;color:#000">T24</div>
<div class="a s" style="left:480px;top:653px;width:46px;text-align:center;font-size:13px;color:#000">T31</div>
<div class="a s" style="left:526px;top:653px;width:47px;text-align:center;font-size:13px;color:#000">T32</div>
<div class="a s" style="left:573px;top:653px;width:46px;text-align:center;font-size:13px;color:#000">T33</div>
<div class="a s" style="left:619px;top:653px;width:46px;text-align:center;font-size:13px;color:#000">T34</div>
<div class="a s" style="left:480px;top:678px;width:46px;text-align:center;font-size:13px;color:#000">T41</div>
<div class="a s" style="left:526px;top:678px;width:47px;text-align:center;font-size:13px;color:#000">T42</div>
<div class="a s" style="left:573px;top:678px;width:46px;text-align:center;font-size:13px;color:#000">T43</div>
<div class="a s" style="left:619px;top:678px;width:46px;text-align:center;font-size:13px;color:#000">T44</div>
<div class="a s" style="left:669px;top:603px;font-size:12px;letter-spacing:-0.4px;color:#000">Measure</div>
<div class="a s" style="left:669px;top:629px;font-size:12px;letter-spacing:-0.4px;color:#000">Format</div>
<div class="a s" style="left:669px;top:654px;font-size:12px;letter-spacing:-0.4px;color:#000">Stimulus</div>
<div class="a s" style="left:669px;top:680px;font-size:12px;letter-spacing:-0.4px;color:#000">Rise Time</div>
<div class="a s" style="left:723px;top:600px;width:77px;height:20px;background:linear-gradient(#f4f4f4,#dadada);border:1px solid #8a8a8a;border-radius:3px;font-size:12px;line-height:18px;padding-left:3px;color:#000;overflow:hidden;letter-spacing:-0.3px"><div style="width:56px;overflow:hidden">Time Doma</div></div><svg class="a" style="left:787px;top:607.5px" width="8" height="6"><polygon points="0,0 7.5,0 3.75,4.5" fill="#000"/></svg>
<div class="a s" style="left:804px;top:600px;width:72px;height:20px;background:linear-gradient(#f4f4f4,#dadada);border:1px solid #8a8a8a;border-radius:3px;font-size:12px;line-height:18px;padding-left:3px;color:#000;overflow:hidden;letter-spacing:-0.3px"><div style="width:51px;overflow:hidden">Single-Enc</div></div><svg class="a" style="left:863px;top:607.5px" width="8" height="6"><polygon points="0,0 7.5,0 3.75,4.5" fill="#000"/></svg>
<div class="a s" style="left:723px;top:626px;width:77px;height:20px;background:linear-gradient(#f4f4f4,#dadada);border:1px solid #8a8a8a;border-radius:3px;font-size:12px;line-height:18px;padding-left:3px;color:#000;overflow:hidden;letter-spacing:-0.3px"><div style="width:56px;overflow:hidden">Volt</div></div><svg class="a" style="left:787px;top:633.5px" width="8" height="6"><polygon points="0,0 7.5,0 3.75,4.5" fill="#000"/></svg>
<div class="a s" style="left:723px;top:652px;width:77px;height:20px;background:linear-gradient(#f4f4f4,#dadada);border:1px solid #8a8a8a;border-radius:3px;font-size:12px;line-height:18px;padding-left:3px;color:#000;overflow:hidden;letter-spacing:-0.3px"><div style="width:56px;overflow:hidden">Lowpass St</div></div><svg class="a" style="left:787px;top:659.5px" width="8" height="6"><polygon points="0,0 7.5,0 3.75,4.5" fill="#000"/></svg>
<div class="a s" style="left:723px;top:677px;width:77px;height:21px;background:linear-gradient(#f4f4f4,#dadada);border:1px solid #8a8a8a;border-radius:3px;font-size:12px;line-height:19px;padding-left:3px;color:#000;overflow:hidden;letter-spacing:-0.3px"><div style="width:56px;overflow:hidden">10-90%</div></div><svg class="a" style="left:787px;top:685.0px" width="8" height="6"><polygon points="0,0 7.5,0 3.75,4.5" fill="#000"/></svg>
<div class="a" style="left:804px;top:629px;width:13px;height:13px;background:#f4f4f4;border:1px solid #c0c0c0"></div>
<div class="a s" style="left:824px;top:628px;font-size:12px;letter-spacing:-0.6px;color:#a8a8a8">Peeling</div>
<div class="a" style="left:804px;top:655px;width:13px;height:13px;background:#f4f4f4;border:1px solid #c0c0c0"></div>
<div class="a s" style="left:823px;top:654px;font-size:12px;letter-spacing:-0.8px;color:#a8a8a8">Smoothing</div>
<div class="a s" style="left:804px;top:678px;width:72px;height:20px;background:#000;color:#fff;font-size:12px;line-height:20px;padding-left:5px">35 ps</div>
<div class="a" style="left:0;top:703px;width:1024px;height:25px;background:#4a4a4a"></div>
<div class="a" style="left:0;top:703px;width:886px;height:1px;background:#6a6a6a"></div>
<div class="a" style="left:0;top:705px;width:886px;height:2px;background:#7e7e7e"></div>
<div class="a" style="left:0;top:703px;width:1px;height:22px;background:#909090"></div>
<div class="a" style="left:0;top:725px;width:1024px;height:3px;background:#0a0a0a"></div>

<div class="a s" style="left:705px;top:707px;width:46px;height:18px;background:#3c3c8a;color:#fff;font-size:16px;letter-spacing:-0.4px;line-height:17px;text-align:center;border:1px solid #5e5e5e">Meas</div>
<div class="a s" style="left:753px;top:707px;width:39px;height:18px;background:#474747;color:#777;font-size:16px;letter-spacing:0px;line-height:17px;text-align:center;border:1px solid #5e5e5e">Stop</div>
<div class="a s" style="left:794px;top:707px;width:52px;height:18px;background:#474747;color:#777;font-size:16px;letter-spacing:0px;line-height:17px;text-align:center;border:1px solid #5e5e5e">ExtRef</div>
<div class="a s" style="left:848px;top:707px;width:31px;height:18px;background:#3c3c8a;color:#fff;font-size:16px;letter-spacing:0px;line-height:17px;text-align:center;border:1px solid #5e5e5e">Svc</div>
<div class="a s" style="left:881px;top:707px;width:138px;height:18px;background:#474747;color:#fff;font-size:16.6px;letter-spacing:0px;line-height:17px;text-align:center;border:1px solid #5e5e5e">2021-03-11 17:33</div>
</body></html>
